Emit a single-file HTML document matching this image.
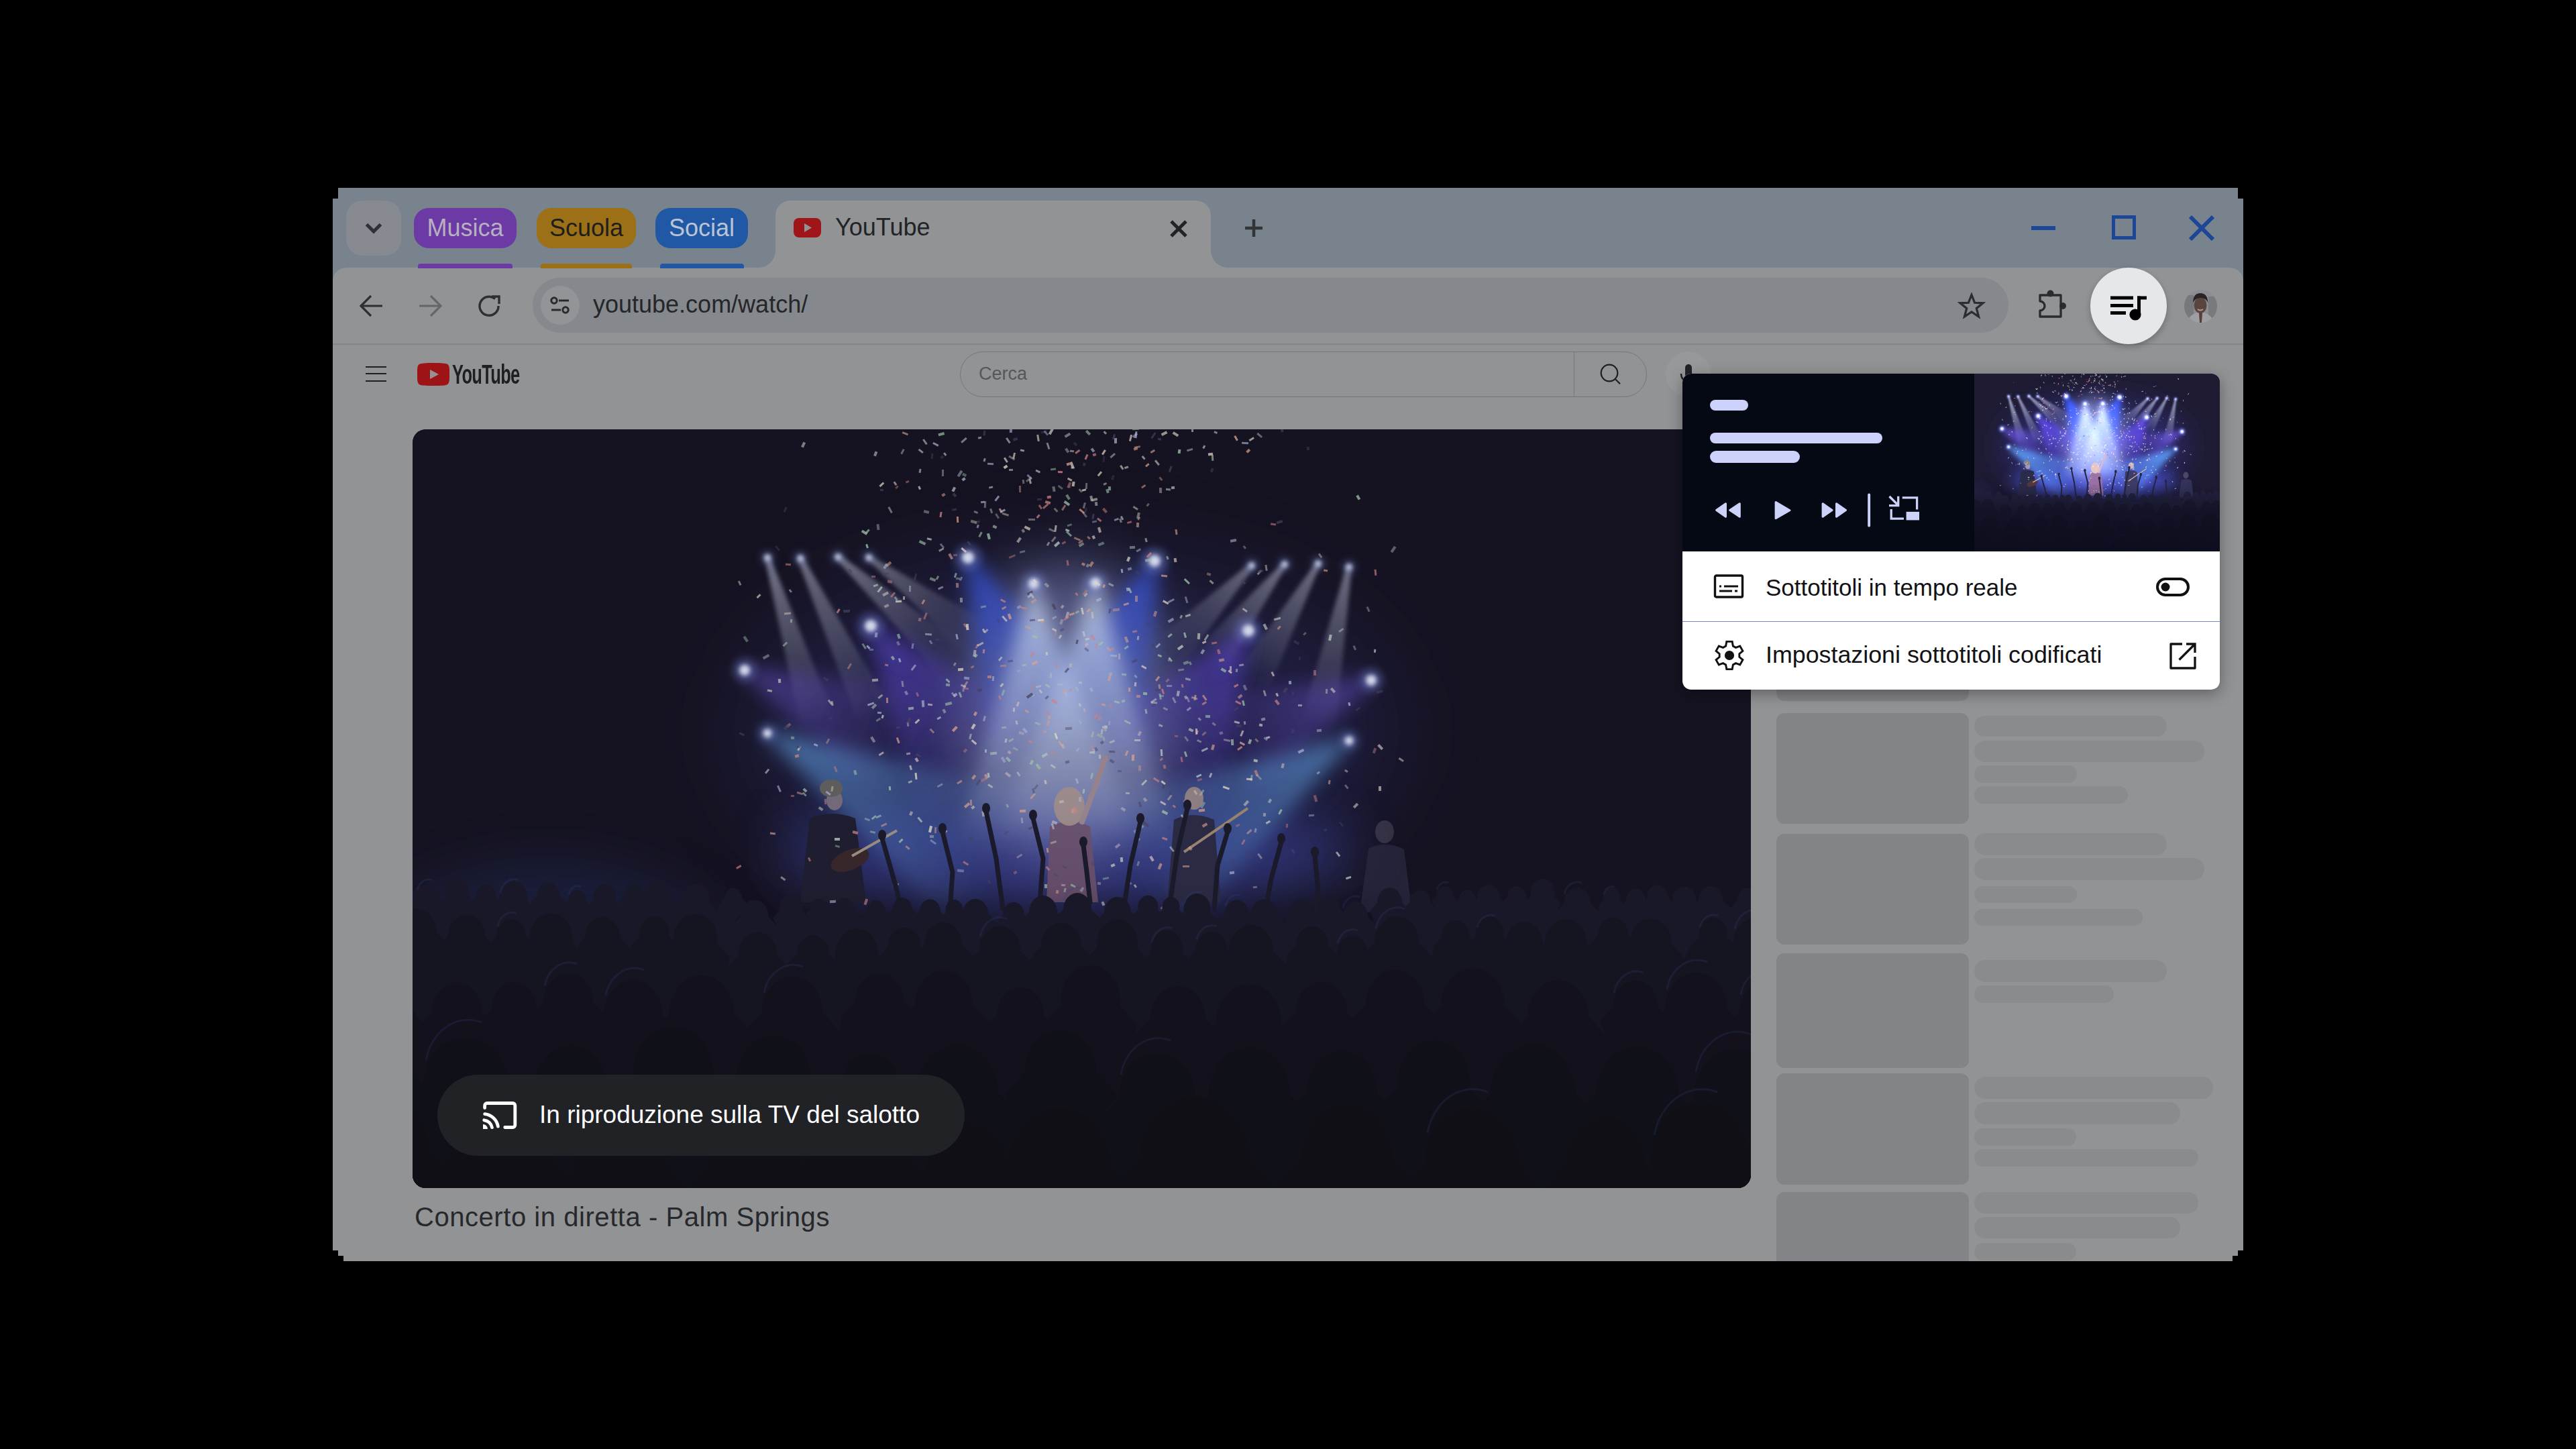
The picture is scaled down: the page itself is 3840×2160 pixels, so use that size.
<!DOCTYPE html>
<html><head><meta charset="utf-8">
<style>
html,body{margin:0;padding:0;}
body{width:3840px;height:2160px;background:#000;position:relative;overflow:hidden;font-family:"Liberation Sans",sans-serif;}
.a{position:absolute;}
.win{left:496px;top:280px;width:2848px;height:1600px;background:rgb(146,147,149);overflow:hidden;}
.strip{left:496px;top:280px;width:2848px;height:150px;background:rgb(120,131,142);}
.toolbar{left:496px;top:399px;width:2848px;height:114px;background:rgb(146,147,149);border-radius:20px 20px 0 0;}
.sep{left:496px;top:512px;width:2848px;height:2px;background:rgb(132,133,136);}
.blk{position:absolute;background:#000;}
.chev{left:516px;top:299px;width:82px;height:82px;border-radius:24px;background:rgb(135,138,145);}
.chip{top:310px;height:60px;border-radius:22px;font-size:36px;line-height:60px;text-align:center;}
.ul{top:393px;height:7px;border-radius:4px 4px 0 0;}
.tab{left:1156px;top:299px;width:649px;height:101px;background:rgb(146,147,149);border-radius:22px 22px 0 0;}
.flareL{left:1130px;top:373px;width:26px;height:26px;background:radial-gradient(circle at 0 0, rgb(120,131,142) 25.5px, rgb(146,147,149) 26.5px);}
.flareR{left:1805px;top:373px;width:26px;height:26px;background:radial-gradient(circle at 100% 0, rgb(120,131,142) 25.5px, rgb(146,147,149) 26.5px);}
.txt{white-space:nowrap;}
</style></head><body>
<div class="a win"></div>
<div class="a strip"></div>
<div class="a toolbar"></div>
<div class="a sep"></div>
<!-- window corner notches -->
<div class="blk" style="left:496px;top:280px;width:8px;height:16px"></div>
<div class="blk" style="left:3336px;top:280px;width:8px;height:16px"></div>
<div class="blk" style="left:496px;top:1864px;width:8px;height:16px"></div>
<div class="blk" style="left:504px;top:1872px;width:8px;height:8px"></div>
<div class="blk" style="left:3336px;top:1864px;width:8px;height:16px"></div>
<div class="blk" style="left:3328px;top:1872px;width:8px;height:8px"></div>

<!-- tab strip -->
<div class="a chev"></div>
<svg class="a" style="left:540px;top:323px" width="34" height="34" viewBox="0 0 34 34"><path d="M6.5 11.5 L17 22 L27.5 11.5" fill="none" stroke="rgb(45,48,55)" stroke-width="5"/></svg>
<div class="a chip txt" style="left:617px;width:153px;background:rgb(108,58,165);color:rgb(182,176,192)">Musica</div>
<div class="a ul" style="left:623px;width:141px;background:rgb(108,58,165)"></div>
<div class="a chip txt" style="left:800px;width:148px;background:rgb(155,112,22);color:rgb(32,30,28)">Scuola</div>
<div class="a ul" style="left:806px;width:136px;background:rgb(155,112,22)"></div>
<div class="a chip txt" style="left:977px;width:138px;background:rgb(32,88,165);color:rgb(186,196,212)">Social</div>
<div class="a ul" style="left:984px;width:125px;background:rgb(32,88,165)"></div>

<div class="a tab"></div>
<div class="a flareL"></div>
<div class="a flareR"></div>

<!-- active tab content -->
<svg class="a" style="left:1183px;top:325px" width="41" height="29" viewBox="0 0 41 29"><rect x="0" y="0" width="41" height="29" rx="8" fill="rgb(160,22,24)"/><path d="M16 8 L27 14.5 L16 21 Z" fill="rgb(146,147,149)"/></svg>
<div class="a txt" style="left:1245px;top:315px;font-size:36px;line-height:48px;color:rgb(34,35,38)">YouTube</div>
<svg class="a" style="left:1742px;top:326px" width="30" height="30" viewBox="0 0 30 30"><path d="M4 4 L26 26 M26 4 L4 26" stroke="rgb(34,35,38)" stroke-width="5"/></svg>
<svg class="a" style="left:1854px;top:325px" width="30" height="30" viewBox="0 0 30 30"><path d="M15 2 V28 M2 15 H28" stroke="rgb(50,52,56)" stroke-width="4.5"/></svg>

<!-- window controls -->
<div class="a" style="left:3028px;top:337px;width:36px;height:6px;background:rgb(28,70,150)"></div>
<div class="a" style="left:3148px;top:321px;width:26px;height:26px;border:5.5px solid rgb(28,70,150)"></div>
<svg class="a" style="left:3262px;top:320px" width="40" height="40" viewBox="0 0 40 40"><path d="M3 3 L37 37 M37 3 L3 37" stroke="rgb(28,70,150)" stroke-width="6"/></svg>

<!-- toolbar -->
<svg class="a" style="left:534px;top:436px" width="40" height="40" viewBox="0 0 40 40"><path d="M36 20 H5 M19 5 L4 20 L19 35" fill="none" stroke="rgb(45,47,50)" stroke-width="3.2"/></svg>
<svg class="a" style="left:621px;top:436px" width="40" height="40" viewBox="0 0 40 40"><path d="M4 20 H35 M21 5 L36 20 L21 35" fill="none" stroke="rgb(100,102,106)" stroke-width="3.2"/></svg>
<svg class="a" style="left:710px;top:436px" width="40" height="40" viewBox="0 0 40 40"><path d="M33 20 A14 14 0 1 1 28 9.5" fill="none" stroke="rgb(45,47,50)" stroke-width="3.4"/><path d="M23 6 H34 V17" fill="none" stroke="rgb(45,47,50)" stroke-width="3.4"/></svg>
<div class="a" style="left:794px;top:414px;width:2200px;height:82px;border-radius:41px;background:rgb(133,136,140)"></div>
<div class="a" style="left:806px;top:426px;width:58px;height:58px;border-radius:50%;background:rgb(147,148,151)"></div>
<svg class="a" style="left:819px;top:439px" width="32" height="32" viewBox="0 0 32 32"><circle cx="7" cy="9" r="4.2" fill="none" stroke="rgb(40,42,46)" stroke-width="3"/><path d="M14 9 H29" stroke="rgb(40,42,46)" stroke-width="3"/><circle cx="24" cy="23" r="4.2" fill="none" stroke="rgb(40,42,46)" stroke-width="3"/><path d="M3 23 H17" stroke="rgb(40,42,46)" stroke-width="3"/></svg>
<div class="a txt" style="left:884px;top:430px;font-size:36px;line-height:48px;color:rgb(36,38,42)">youtube.com/watch/</div>
<svg class="a" style="left:2918px;top:436px" width="42" height="42" viewBox="0 0 42 42"><path d="M21 3.5 L25.6 15.3 L38 15.8 L28.3 23.7 L31.6 36 L21 29 L10.4 36 L13.7 23.7 L4 15.8 L16.4 15.3 Z" fill="none" stroke="rgb(42,44,48)" stroke-width="3.2" stroke-linejoin="miter"/></svg>
<svg class="a" style="left:3036px;top:432px" width="46" height="46" viewBox="0 0 46 46"><path d="M5 8 H36 V40 H5 V31 A7 7 0 0 0 5 17 Z" fill="none" stroke="rgb(42,44,48)" stroke-width="3.3" stroke-linejoin="round"/><circle cx="20.5" cy="5.5" r="5" fill="rgb(42,44,48)"/><circle cx="39" cy="24" r="5" fill="rgb(42,44,48)"/></svg>
<div class="a" style="left:3116px;top:399px;width:114px;height:114px;border-radius:50%;background:rgb(230,231,235);box-shadow:0 4px 10px rgba(0,0,0,0.25)"></div>
<svg class="a" style="left:3140px;top:436px" width="66" height="46" viewBox="0 0 66 46"><rect x="6" y="5.5" width="34" height="5" fill="#000"/><rect x="6" y="17" width="34" height="5" fill="#000"/><rect x="6" y="28" width="23" height="5" fill="#000"/><rect x="46" y="5.5" width="14" height="5" fill="#000"/><rect x="46" y="5.5" width="5" height="30" fill="#000"/><circle cx="43" cy="33" r="8.6" fill="#000"/></svg>
<svg class="a" style="left:3256px;top:432px" width="49" height="49" viewBox="0 0 49 49"><defs><clipPath id="avc"><circle cx="24.5" cy="24.5" r="24.5"/></clipPath></defs><g clip-path="url(#avc)"><rect width="49" height="49" fill="rgb(140,141,144)"/><rect x="0" y="8" width="14" height="34" fill="rgb(118,120,124)"/><rect x="36" y="10" width="13" height="32" fill="rgb(120,122,126)"/><path d="M4 49 Q8 35 24 33 Q40 35 45 49 Z" fill="rgb(158,159,162)"/><path d="M22 34 L27 34 L26 49 L23 49 Z" fill="rgb(85,62,56)"/><ellipse cx="24" cy="23" rx="9.5" ry="12" fill="rgb(92,68,62)"/><path d="M13 20 Q13 5 24 5 Q35 5 35.5 20 Q33 12 24 12 Q16 12 13 20 Z" fill="rgb(38,36,38)"/><path d="M20 29 Q24 32 28 29" stroke="rgb(170,160,160)" stroke-width="1.8" fill="none"/></g></svg>

<!-- youtube header -->
<div class="a" style="left:545px;top:546px;width:31px;height:2px;background:rgb(30,31,34)"></div>
<div class="a" style="left:545px;top:556px;width:31px;height:2px;background:rgb(30,31,34)"></div>
<div class="a" style="left:545px;top:566.5px;width:31px;height:2px;background:rgb(30,31,34)"></div>
<svg class="a" style="left:622px;top:541px" width="48" height="34" viewBox="0 0 48 34"><path d="M24 0 C36 0 42 0.6 44.2 1.6 C46.6 2.6 47.6 5 47.9 9 C48.1 12 48.1 22 47.9 25 C47.6 29 46.6 31.4 44.2 32.4 C42 33.4 36 34 24 34 C12 34 6 33.4 3.8 32.4 C1.4 31.4 0.4 29 0.1 25 C-0.1 22 -0.1 12 0.1 9 C0.4 5 1.4 2.6 3.8 1.6 C6 0.6 12 0 24 0 Z" fill="rgb(158,20,22)"/><path d="M19 10 L32 17 L19 24 Z" fill="rgb(146,147,149)"/></svg>
<div class="a txt" style="left:674px;top:534px;font-size:41px;line-height:48px;font-weight:bold;color:rgb(30,31,34);letter-spacing:-1px;transform:scaleX(0.62);transform-origin:0 0">YouTube</div>

<!-- search -->
<div class="a" style="left:1431px;top:524px;width:1022px;height:66px;border:1px solid rgb(118,119,122);border-radius:34px;"></div>
<div class="a" style="left:2346px;top:525px;width:1px;height:66px;background:rgb(118,119,122)"></div>
<div class="a txt" style="left:1459px;top:540px;font-size:27px;line-height:34px;color:rgb(86,87,91)">Cerca</div>
<svg class="a" style="left:2380px;top:538px" width="40" height="40" viewBox="0 0 40 40"><circle cx="19" cy="18" r="12.3" fill="none" stroke="rgb(30,31,34)" stroke-width="2.2"/><path d="M27.8 27 L35 34.2" stroke="rgb(30,31,34)" stroke-width="2.2"/></svg>
<div class="a" style="left:2483px;top:524px;width:67px;height:67px;border-radius:50%;background:rgb(151,152,154)"></div>
<svg class="a" style="left:2496px;top:538px" width="40" height="40" viewBox="0 0 40 40"><rect x="16" y="5" width="10" height="20" rx="5" fill="rgb(34,35,38)"/><path d="M10 19 C10 26 14 31 21 31 C28 31 32 26 32 19" fill="none" stroke="rgb(34,35,38)" stroke-width="2.4"/></svg>

<!-- video -->
<div class="a" id="video" style="left:615px;top:640px;width:1995px;height:1131px;border-radius:20px;overflow:hidden;background:rgb(24,22,40)"><svg width="1995" height="1131" viewBox="0 0 1995 1131" style="position:absolute;left:0;top:0"><g id="vsvg"><defs><filter id="b70" x="-120%" y="-120%" width="340%" height="340%"><feGaussianBlur stdDeviation="70"/></filter><filter id="b40" x="-120%" y="-120%" width="340%" height="340%"><feGaussianBlur stdDeviation="40"/></filter><filter id="b22" x="-120%" y="-120%" width="340%" height="340%"><feGaussianBlur stdDeviation="22"/></filter><filter id="b14" x="-120%" y="-120%" width="340%" height="340%"><feGaussianBlur stdDeviation="14"/></filter><filter id="b6" x="-120%" y="-120%" width="340%" height="340%"><feGaussianBlur stdDeviation="6"/></filter><filter id="b3" x="-120%" y="-120%" width="340%" height="340%"><feGaussianBlur stdDeviation="3"/></filter><linearGradient id="crowd" x1="0" y1="0" x2="0" y2="1"><stop offset="0" stop-color="rgb(15,15,25)" stop-opacity="0"/><stop offset="0.6" stop-color="rgb(15,15,25)" stop-opacity="0"/><stop offset="0.75" stop-color="rgb(15,15,25)" stop-opacity="0.55"/><stop offset="1" stop-color="rgb(14,14,22)" stop-opacity="0.8"/></linearGradient><linearGradient id="g0" gradientUnits="userSpaceOnUse" x1="529" y1="191" x2="605" y2="440"><stop offset="0" stop-color="rgb(195, 200, 225)" stop-opacity="0.55"/><stop offset="1" stop-color="rgb(195, 200, 225)" stop-opacity="0"/></linearGradient><linearGradient id="g1" gradientUnits="userSpaceOnUse" x1="578" y1="192" x2="690" y2="430"><stop offset="0" stop-color="rgb(195, 200, 225)" stop-opacity="0.5"/><stop offset="1" stop-color="rgb(195, 200, 225)" stop-opacity="0"/></linearGradient><linearGradient id="g2" gradientUnits="userSpaceOnUse" x1="634" y1="190" x2="805" y2="345"><stop offset="0" stop-color="rgb(195, 200, 225)" stop-opacity="0.5"/><stop offset="1" stop-color="rgb(195, 200, 225)" stop-opacity="0"/></linearGradient><linearGradient id="g3" gradientUnits="userSpaceOnUse" x1="680" y1="191" x2="840" y2="310"><stop offset="0" stop-color="rgb(195, 200, 225)" stop-opacity="0.45"/><stop offset="1" stop-color="rgb(195, 200, 225)" stop-opacity="0"/></linearGradient><linearGradient id="g4" gradientUnits="userSpaceOnUse" x1="1251" y1="203" x2="1130" y2="330"><stop offset="0" stop-color="rgb(195, 200, 225)" stop-opacity="0.45"/><stop offset="1" stop-color="rgb(195, 200, 225)" stop-opacity="0"/></linearGradient><linearGradient id="g5" gradientUnits="userSpaceOnUse" x1="1300" y1="201" x2="1185" y2="350"><stop offset="0" stop-color="rgb(195, 200, 225)" stop-opacity="0.5"/><stop offset="1" stop-color="rgb(195, 200, 225)" stop-opacity="0"/></linearGradient><linearGradient id="g6" gradientUnits="userSpaceOnUse" x1="1350" y1="200" x2="1250" y2="380"><stop offset="0" stop-color="rgb(195, 200, 225)" stop-opacity="0.5"/><stop offset="1" stop-color="rgb(195, 200, 225)" stop-opacity="0"/></linearGradient><linearGradient id="g7" gradientUnits="userSpaceOnUse" x1="1396" y1="205" x2="1350" y2="440"><stop offset="0" stop-color="rgb(195, 200, 225)" stop-opacity="0.5"/><stop offset="1" stop-color="rgb(195, 200, 225)" stop-opacity="0"/></linearGradient><linearGradient id="g8" gradientUnits="userSpaceOnUse" x1="828" y1="191" x2="960" y2="480"><stop offset="0" stop-color="rgb(55, 85, 225)" stop-opacity="0.8"/><stop offset="1" stop-color="rgb(55, 85, 225)" stop-opacity="0"/></linearGradient><linearGradient id="g9" gradientUnits="userSpaceOnUse" x1="1106" y1="196" x2="990" y2="480"><stop offset="0" stop-color="rgb(55, 85, 225)" stop-opacity="0.8"/><stop offset="1" stop-color="rgb(55, 85, 225)" stop-opacity="0"/></linearGradient><linearGradient id="g10" gradientUnits="userSpaceOnUse" x1="683" y1="293" x2="860" y2="520"><stop offset="0" stop-color="rgb(90, 70, 205)" stop-opacity="0.7"/><stop offset="1" stop-color="rgb(90, 70, 205)" stop-opacity="0"/></linearGradient><linearGradient id="g11" gradientUnits="userSpaceOnUse" x1="1246" y1="300" x2="1090" y2="530"><stop offset="0" stop-color="rgb(90, 70, 205)" stop-opacity="0.7"/><stop offset="1" stop-color="rgb(90, 70, 205)" stop-opacity="0"/></linearGradient><linearGradient id="g12" gradientUnits="userSpaceOnUse" x1="495" y1="359" x2="750" y2="480"><stop offset="0" stop-color="rgb(100, 80, 195)" stop-opacity="0.6"/><stop offset="1" stop-color="rgb(100, 80, 195)" stop-opacity="0"/></linearGradient><linearGradient id="g13" gradientUnits="userSpaceOnUse" x1="1429" y1="374" x2="1180" y2="490"><stop offset="0" stop-color="rgb(100, 80, 195)" stop-opacity="0.6"/><stop offset="1" stop-color="rgb(100, 80, 195)" stop-opacity="0"/></linearGradient><linearGradient id="g14" gradientUnits="userSpaceOnUse" x1="529" y1="453" x2="880" y2="650"><stop offset="0" stop-color="rgb(95, 155, 220)" stop-opacity="0.7"/><stop offset="1" stop-color="rgb(95, 155, 220)" stop-opacity="0"/></linearGradient><linearGradient id="g15" gradientUnits="userSpaceOnUse" x1="1396" y1="464" x2="1070" y2="660"><stop offset="0" stop-color="rgb(95, 155, 220)" stop-opacity="0.7"/><stop offset="1" stop-color="rgb(95, 155, 220)" stop-opacity="0"/></linearGradient><linearGradient id="g16" gradientUnits="userSpaceOnUse" x1="926" y1="230" x2="945" y2="620"><stop offset="0" stop-color="rgb(200, 215, 240)" stop-opacity="0.78"/><stop offset="1" stop-color="rgb(200, 215, 240)" stop-opacity="0"/></linearGradient><linearGradient id="g17" gradientUnits="userSpaceOnUse" x1="1018" y1="229" x2="1005" y2="620"><stop offset="0" stop-color="rgb(200, 215, 240)" stop-opacity="0.78"/><stop offset="1" stop-color="rgb(200, 215, 240)" stop-opacity="0"/></linearGradient></defs><rect width="1995" height="1131" fill="rgb(21,19,33)"/><ellipse cx="975" cy="450" rx="480" ry="250" fill="rgb(50,50,125)" opacity="0.35" filter="url(#b70)"/><ellipse cx="975" cy="630" rx="430" ry="80" fill="rgb(60,68,160)" opacity="0.6" filter="url(#b40)"/><ellipse cx="975" cy="420" rx="170" ry="220" fill="rgb(150,160,215)" opacity="0.45" filter="url(#b40)"/><ellipse cx="200" cy="850" rx="300" ry="200" fill="rgb(35,45,95)" opacity="0.45" filter="url(#b40)"/><polygon points="525,192 580,448 630,432 533,190" fill="url(#g0)" filter="url(#b3)"/><polygon points="574,194 666,441 714,419 582,190" fill="url(#g1)" filter="url(#b3)"/><polygon points="631,193 786,366 824,324 637,187" fill="url(#g2)" filter="url(#b3)"/><polygon points="678,194 823,332 857,288 682,188" fill="url(#g3)" filter="url(#b3)"/><polygon points="1248,200 1110,311 1150,349 1254,206" fill="url(#g4)" filter="url(#b3)"/><polygon points="1297,199 1163,333 1207,367 1303,203" fill="url(#g5)" filter="url(#b3)"/><polygon points="1347,198 1226,366 1274,394 1353,202" fill="url(#g6)" filter="url(#b3)"/><polygon points="1392,204 1324,435 1376,445 1400,206" fill="url(#g7)" filter="url(#b3)"/><polygon points="824,193 864,524 1056,436 832,189" fill="url(#g8)" filter="url(#b14)"/><polygon points="1102,194 893,440 1087,520 1110,198" fill="url(#g9)" filter="url(#b14)"/><polygon points="680,295 761,597 959,443 686,291" fill="url(#g10)" filter="url(#b14)"/><polygon points="1243,298 987,460 1193,600 1249,302" fill="url(#g11)" filter="url(#b14)"/><polygon points="493,363 707,570 793,390 497,355" fill="url(#g12)" filter="url(#b14)"/><polygon points="1427,370 1138,399 1222,581 1431,378" fill="url(#g13)" filter="url(#b14)"/><polygon points="527,456 821,755 939,545 531,450" fill="url(#g14)" filter="url(#b14)"/><polygon points="1394,461 1008,557 1132,763 1398,467" fill="url(#g15)" filter="url(#b14)"/><polygon points="922,230 810,627 1080,613 930,230" fill="url(#g16)" filter="url(#b14)"/><polygon points="1014,229 870,616 1140,624 1022,229" fill="url(#g17)" filter="url(#b14)"/><circle cx="529" cy="191" r="9.9" fill="rgb(140,160,255)" opacity="0.3" filter="url(#b6)"/><circle cx="529" cy="191" r="4.5" fill="rgb(210,215,235)" filter="url(#b3)"/><circle cx="578" cy="192" r="9.9" fill="rgb(140,160,255)" opacity="0.3" filter="url(#b6)"/><circle cx="578" cy="192" r="4.5" fill="rgb(210,215,235)" filter="url(#b3)"/><circle cx="634" cy="190" r="9.9" fill="rgb(140,160,255)" opacity="0.3" filter="url(#b6)"/><circle cx="634" cy="190" r="4.5" fill="rgb(210,215,235)" filter="url(#b3)"/><circle cx="680" cy="191" r="9.9" fill="rgb(140,160,255)" opacity="0.3" filter="url(#b6)"/><circle cx="680" cy="191" r="4.5" fill="rgb(210,215,235)" filter="url(#b3)"/><circle cx="828" cy="191" r="19.8" fill="rgb(140,160,255)" opacity="0.3" filter="url(#b6)"/><circle cx="828" cy="191" r="9" fill="rgb(210,215,235)" filter="url(#b3)"/><circle cx="1106" cy="196" r="19.8" fill="rgb(140,160,255)" opacity="0.3" filter="url(#b6)"/><circle cx="1106" cy="196" r="9" fill="rgb(210,215,235)" filter="url(#b3)"/><circle cx="926" cy="230" r="17.6" fill="rgb(140,160,255)" opacity="0.3" filter="url(#b6)"/><circle cx="926" cy="230" r="8" fill="rgb(210,215,235)" filter="url(#b3)"/><circle cx="1018" cy="229" r="17.6" fill="rgb(140,160,255)" opacity="0.3" filter="url(#b6)"/><circle cx="1018" cy="229" r="8" fill="rgb(210,215,235)" filter="url(#b3)"/><circle cx="1251" cy="203" r="9.9" fill="rgb(140,160,255)" opacity="0.3" filter="url(#b6)"/><circle cx="1251" cy="203" r="4.5" fill="rgb(210,215,235)" filter="url(#b3)"/><circle cx="1300" cy="201" r="9.9" fill="rgb(140,160,255)" opacity="0.3" filter="url(#b6)"/><circle cx="1300" cy="201" r="4.5" fill="rgb(210,215,235)" filter="url(#b3)"/><circle cx="1350" cy="200" r="9.9" fill="rgb(140,160,255)" opacity="0.3" filter="url(#b6)"/><circle cx="1350" cy="200" r="4.5" fill="rgb(210,215,235)" filter="url(#b3)"/><circle cx="1396" cy="205" r="9.9" fill="rgb(140,160,255)" opacity="0.3" filter="url(#b6)"/><circle cx="1396" cy="205" r="4.5" fill="rgb(210,215,235)" filter="url(#b3)"/><circle cx="683" cy="293" r="19.8" fill="rgb(140,160,255)" opacity="0.3" filter="url(#b6)"/><circle cx="683" cy="293" r="9" fill="rgb(210,215,235)" filter="url(#b3)"/><circle cx="1246" cy="300" r="19.8" fill="rgb(140,160,255)" opacity="0.3" filter="url(#b6)"/><circle cx="1246" cy="300" r="9" fill="rgb(210,215,235)" filter="url(#b3)"/><circle cx="495" cy="359" r="17.6" fill="rgb(140,160,255)" opacity="0.3" filter="url(#b6)"/><circle cx="495" cy="359" r="8" fill="rgb(210,215,235)" filter="url(#b3)"/><circle cx="1429" cy="374" r="17.6" fill="rgb(140,160,255)" opacity="0.3" filter="url(#b6)"/><circle cx="1429" cy="374" r="8" fill="rgb(210,215,235)" filter="url(#b3)"/><circle cx="529" cy="453" r="14.3" fill="rgb(140,160,255)" opacity="0.3" filter="url(#b6)"/><circle cx="529" cy="453" r="6.5" fill="rgb(210,215,235)" filter="url(#b3)"/><circle cx="1396" cy="464" r="14.3" fill="rgb(140,160,255)" opacity="0.3" filter="url(#b6)"/><circle cx="1396" cy="464" r="6.5" fill="rgb(210,215,235)" filter="url(#b3)"/><g><path d="M592 580 Q625 566 660 580 L676 705 L578 705 Z" fill="rgb(30,30,48)"/><ellipse cx="629" cy="553" rx="12" ry="15" fill="rgb(115,105,120)"/><ellipse cx="624" cy="535" rx="17" ry="13" fill="rgb(95,93,92)"/><ellipse cx="652" cy="642" rx="30" ry="15" fill="rgb(55,38,42)" transform="rotate(-22 652 642)"/><line x1="655" y1="636" x2="722" y2="598" stroke="rgb(150,140,130)" stroke-width="4"/><path d="M950 592 Q979 578 1010 592 L1022 705 L945 705 Z" fill="rgb(105,80,105)" opacity="0.9"/><ellipse cx="979" cy="562" rx="23" ry="29" fill="rgb(160,140,135)" opacity="0.9"/><line x1="998" y1="585" x2="1033" y2="490" stroke="rgb(150,130,140)" stroke-width="8" stroke-linecap="round"/><path d="M1135 582 Q1163 568 1195 582 L1205 705 L1125 705 Z" fill="rgb(42,42,68)"/><ellipse cx="1165" cy="550" rx="14" ry="17" fill="rgb(140,125,130)"/><line x1="1150" y1="630" x2="1245" y2="565" stroke="rgb(150,130,110)" stroke-width="4"/><path d="M1425 625 Q1449 612 1478 626 L1490 720 L1412 720 Z" fill="rgb(40,40,62)" opacity="0.8"/><ellipse cx="1449" cy="600" rx="14" ry="17" fill="rgb(60,58,75)" opacity="0.8"/></g><g><rect x="787" y="63" width="10" height="3" fill="rgb(170, 180, 210)" opacity="0.47" transform="rotate(91 791 64)"/><rect x="760" y="17" width="9" height="3" fill="rgb(185, 200, 190)" opacity="0.60" transform="rotate(55 764 18)"/><rect x="1135" y="152" width="8" height="3" fill="rgb(215, 160, 140)" opacity="0.64" transform="rotate(82 1139 153)"/><rect x="999" y="52" width="5" height="4" fill="rgb(70, 65, 95)" opacity="0.52" transform="rotate(108 1002 53)"/><rect x="889" y="59" width="6" height="3" fill="rgb(185, 200, 190)" opacity="0.57" transform="rotate(1 892 61)"/><rect x="1258" y="7" width="9" height="3" fill="rgb(225, 215, 200)" opacity="0.41" transform="rotate(41 1262 9)"/><rect x="906" y="30" width="6" height="3" fill="rgb(200, 185, 185)" opacity="0.72" transform="rotate(12 909 31)"/><rect x="1073" y="-1" width="10" height="3" fill="rgb(160, 195, 170)" opacity="0.56" transform="rotate(176 1078 0)"/><rect x="880" y="44" width="8" height="3" fill="rgb(200, 185, 185)" opacity="0.77" transform="rotate(56 884 46)"/><rect x="976" y="84" width="6" height="3" fill="rgb(70, 65, 95)" opacity="0.47" transform="rotate(11 979 85)"/><rect x="820" y="66" width="6" height="4" fill="rgb(160, 195, 170)" opacity="0.44" transform="rotate(24 823 67)"/><rect x="881" y="54" width="6" height="4" fill="rgb(225, 215, 200)" opacity="0.78" transform="rotate(145 884 56)"/><rect x="1066" y="12" width="10" height="3" fill="rgb(200, 185, 185)" opacity="0.78" transform="rotate(104 1071 13)"/><rect x="997" y="126" width="9" height="3" fill="rgb(185, 200, 190)" opacity="0.43" transform="rotate(53 1002 128)"/><rect x="1027" y="232" width="5" height="3" fill="rgb(215, 160, 140)" opacity="0.76" transform="rotate(112 1030 234)"/><rect x="775" y="21" width="9" height="3" fill="rgb(170, 180, 210)" opacity="0.71" transform="rotate(28 780 23)"/><rect x="971" y="108" width="9" height="4" fill="rgb(160, 195, 170)" opacity="0.74" transform="rotate(35 975 110)"/><rect x="847" y="106" width="6" height="3" fill="rgb(170, 180, 210)" opacity="0.68" transform="rotate(173 850 108)"/><rect x="848" y="110" width="10" height="3" fill="rgb(185, 200, 190)" opacity="0.45" transform="rotate(94 853 112)"/><rect x="754" y="31" width="8" height="3" fill="rgb(170, 180, 210)" opacity="0.68" transform="rotate(38 758 32)"/><rect x="1112" y="72" width="6" height="3" fill="rgb(215, 160, 140)" opacity="0.44" transform="rotate(51 1115 74)"/><rect x="1078" y="140" width="7" height="4" fill="rgb(215, 160, 140)" opacity="0.62" transform="rotate(94 1081 142)"/><rect x="1123" y="88" width="7" height="3" fill="rgb(185, 200, 190)" opacity="0.58" transform="rotate(6 1126 89)"/><rect x="954" y="147" width="10" height="3" fill="rgb(200, 185, 185)" opacity="0.74" transform="rotate(98 959 148)"/><rect x="952" y="262" width="9" height="4" fill="rgb(70, 65, 95)" opacity="0.74" transform="rotate(63 956 264)"/><rect x="1078" y="126" width="9" height="4" fill="rgb(160, 195, 170)" opacity="0.54" transform="rotate(103 1082 128)"/><rect x="1030" y="4" width="5" height="3" fill="rgb(160, 195, 170)" opacity="0.68" transform="rotate(46 1033 5)"/><rect x="784" y="177" width="8" height="3" fill="rgb(185, 200, 190)" opacity="0.60" transform="rotate(151 788 179)"/><rect x="844" y="12" width="5" height="3" fill="rgb(185, 200, 190)" opacity="0.59" transform="rotate(172 846 13)"/><rect x="718" y="251" width="6" height="3" fill="rgb(170, 180, 210)" opacity="0.60" transform="rotate(54 721 252)"/><rect x="973" y="154" width="10" height="3" fill="rgb(160, 195, 170)" opacity="0.65" transform="rotate(43 978 156)"/><rect x="1021" y="169" width="9" height="4" fill="rgb(160, 195, 170)" opacity="0.48" transform="rotate(158 1026 171)"/><rect x="1063" y="54" width="6" height="3" fill="rgb(200, 185, 185)" opacity="0.67" transform="rotate(161 1065 56)"/><rect x="1087" y="41" width="6" height="3" fill="rgb(170, 180, 210)" opacity="0.72" transform="rotate(50 1090 42)"/><rect x="836" y="137" width="8" height="4" fill="rgb(70, 65, 95)" opacity="0.52" transform="rotate(152 841 139)"/><rect x="1028" y="119" width="8" height="4" fill="rgb(205, 130, 130)" opacity="0.52" transform="rotate(51 1032 121)"/><rect x="980" y="31" width="6" height="3" fill="rgb(225, 215, 200)" opacity="0.49" transform="rotate(4 983 32)"/><rect x="1000" y="39" width="8" height="3" fill="rgb(205, 130, 130)" opacity="0.76" transform="rotate(113 1004 41)"/><rect x="931" y="103" width="7" height="3" fill="rgb(70, 65, 95)" opacity="0.60" transform="rotate(2 935 104)"/><rect x="1075" y="26" width="9" height="3" fill="rgb(215, 160, 140)" opacity="0.55" transform="rotate(170 1080 27)"/><rect x="1268" y="204" width="9" height="3" fill="rgb(200, 185, 185)" opacity="0.54" transform="rotate(82 1272 206)"/><rect x="690" y="145" width="9" height="4" fill="rgb(170, 180, 210)" opacity="0.44" transform="rotate(83 695 146)"/><rect x="1149" y="225" width="10" height="3" fill="rgb(160, 195, 170)" opacity="0.77" transform="rotate(44 1154 227)"/><rect x="1155" y="28" width="9" height="3" fill="rgb(200, 185, 185)" opacity="0.53" transform="rotate(164 1159 30)"/><rect x="1111" y="89" width="8" height="4" fill="rgb(200, 185, 185)" opacity="0.48" transform="rotate(88 1115 91)"/><rect x="1079" y="131" width="5" height="3" fill="rgb(215, 160, 140)" opacity="0.58" transform="rotate(124 1082 133)"/><rect x="1293" y="-1" width="8" height="4" fill="rgb(70, 65, 95)" opacity="0.62" transform="rotate(79 1297 0)"/><rect x="877" y="264" width="7" height="3" fill="rgb(215, 160, 140)" opacity="0.60" transform="rotate(150 881 266)"/><rect x="1078" y="180" width="7" height="3" fill="rgb(170, 180, 210)" opacity="0.52" transform="rotate(152 1082 181)"/><rect x="1091" y="164" width="6" height="3" fill="rgb(185, 200, 190)" opacity="0.59" transform="rotate(74 1094 165)"/><rect x="942" y="23" width="10" height="3" fill="rgb(185, 200, 190)" opacity="0.59" transform="rotate(72 947 25)"/><rect x="951" y="57" width="8" height="3" fill="rgb(160, 195, 170)" opacity="0.50" transform="rotate(172 955 59)"/><rect x="894" y="13" width="7" height="4" fill="rgb(70, 65, 95)" opacity="0.60" transform="rotate(162 898 15)"/><rect x="1094" y="110" width="5" height="3" fill="rgb(200, 185, 185)" opacity="0.41" transform="rotate(126 1096 112)"/><rect x="985" y="20" width="6" height="4" fill="rgb(70, 65, 95)" opacity="0.44" transform="rotate(44 988 22)"/><rect x="962" y="85" width="8" height="3" fill="rgb(160, 195, 170)" opacity="0.41" transform="rotate(36 966 86)"/><rect x="783" y="234" width="8" height="3" fill="rgb(170, 180, 210)" opacity="0.60" transform="rotate(155 787 236)"/><rect x="1093" y="187" width="9" height="3" fill="rgb(205, 130, 130)" opacity="0.74" transform="rotate(133 1098 188)"/><rect x="918" y="134" width="10" height="3" fill="rgb(185, 200, 190)" opacity="0.45" transform="rotate(180 923 135)"/><rect x="988" y="272" width="6" height="3" fill="rgb(160, 195, 170)" opacity="0.61" transform="rotate(150 991 273)"/><rect x="943" y="107" width="8" height="4" fill="rgb(205, 130, 130)" opacity="0.75" transform="rotate(17 947 109)"/><rect x="1044" y="15" width="8" height="4" fill="rgb(170, 180, 210)" opacity="0.71" transform="rotate(91 1048 17)"/><rect x="938" y="3" width="9" height="3" fill="rgb(70, 65, 95)" opacity="0.46" transform="rotate(163 942 4)"/><rect x="1011" y="103" width="9" height="4" fill="rgb(185, 200, 190)" opacity="0.62" transform="rotate(167 1016 105)"/><rect x="1123" y="191" width="5" height="3" fill="rgb(160, 195, 170)" opacity="0.60" transform="rotate(70 1126 192)"/><rect x="788" y="96" width="5" height="4" fill="rgb(215, 160, 140)" opacity="0.56" transform="rotate(152 791 98)"/><rect x="879" y="125" width="10" height="3" fill="rgb(200, 185, 185)" opacity="0.52" transform="rotate(17 883 126)"/><rect x="1218" y="164" width="9" height="4" fill="rgb(170, 180, 210)" opacity="0.59" transform="rotate(169 1223 166)"/><rect x="1241" y="31" width="6" height="4" fill="rgb(215, 160, 140)" opacity="0.71" transform="rotate(134 1245 33)"/><rect x="705" y="201" width="9" height="4" fill="rgb(215, 160, 140)" opacity="0.55" transform="rotate(138 710 202)"/><rect x="962" y="62" width="7" height="3" fill="rgb(205, 130, 130)" opacity="0.78" transform="rotate(2 965 64)"/><rect x="1011" y="29" width="6" height="4" fill="rgb(170, 180, 210)" opacity="0.65" transform="rotate(54 1014 31)"/><rect x="804" y="87" width="7" height="4" fill="rgb(185, 200, 190)" opacity="0.69" transform="rotate(116 807 89)"/><rect x="1003" y="3" width="8" height="4" fill="rgb(160, 195, 170)" opacity="0.59" transform="rotate(46 1007 5)"/><rect x="988" y="244" width="5" height="3" fill="rgb(205, 130, 130)" opacity="0.61" transform="rotate(50 990 245)"/><rect x="580" y="20" width="8" height="4" fill="rgb(185, 200, 190)" opacity="0.61" transform="rotate(115 583 22)"/><rect x="704" y="261" width="7" height="4" fill="rgb(200, 185, 185)" opacity="0.56" transform="rotate(154 707 263)"/><rect x="849" y="3" width="7" height="3" fill="rgb(70, 65, 95)" opacity="0.65" transform="rotate(95 852 5)"/><rect x="857" y="50" width="9" height="3" fill="rgb(170, 180, 210)" opacity="0.62" transform="rotate(3 861 52)"/><rect x="868" y="128" width="8" height="3" fill="rgb(160, 195, 170)" opacity="0.42" transform="rotate(57 872 129)"/><rect x="1332" y="27" width="5" height="4" fill="rgb(70, 65, 95)" opacity="0.50" transform="rotate(77 1335 29)"/><rect x="974" y="50" width="5" height="4" fill="rgb(215, 160, 140)" opacity="0.77" transform="rotate(164 977 52)"/><rect x="1055" y="210" width="6" height="3" fill="rgb(170, 180, 210)" opacity="0.73" transform="rotate(82 1058 211)"/><rect x="918" y="76" width="7" height="3" fill="rgb(225, 215, 200)" opacity="0.64" transform="rotate(75 921 77)"/><rect x="912" y="145" width="9" height="4" fill="rgb(225, 215, 200)" opacity="0.68" transform="rotate(25 916 147)"/><rect x="976" y="82" width="9" height="4" fill="rgb(205, 130, 130)" opacity="0.50" transform="rotate(112 980 83)"/><rect x="785" y="172" width="8" height="3" fill="rgb(170, 180, 210)" opacity="0.47" transform="rotate(50 789 174)"/><rect x="1238" y="175" width="5" height="3" fill="rgb(160, 195, 170)" opacity="0.41" transform="rotate(49 1241 176)"/><rect x="1075" y="27" width="6" height="4" fill="rgb(215, 160, 140)" opacity="0.61" transform="rotate(164 1078 29)"/><rect x="873" y="119" width="7" height="3" fill="rgb(215, 160, 140)" opacity="0.72" transform="rotate(62 876 121)"/><rect x="1038" y="37" width="9" height="3" fill="rgb(170, 180, 210)" opacity="0.57" transform="rotate(138 1043 39)"/><rect x="970" y="168" width="6" height="3" fill="rgb(205, 130, 130)" opacity="0.51" transform="rotate(151 972 169)"/><rect x="988" y="316" width="6" height="3" fill="rgb(70, 65, 95)" opacity="0.73" transform="rotate(105 991 317)"/><rect x="1026" y="32" width="8" height="3" fill="rgb(225, 215, 200)" opacity="0.71" transform="rotate(123 1030 34)"/><rect x="1099" y="7" width="10" height="3" fill="rgb(70, 65, 95)" opacity="0.68" transform="rotate(125 1104 9)"/><rect x="930" y="129" width="6" height="3" fill="rgb(205, 130, 130)" opacity="0.74" transform="rotate(131 933 130)"/><rect x="900" y="163" width="8" height="4" fill="rgb(225, 215, 200)" opacity="0.57" transform="rotate(124 904 165)"/><rect x="1014" y="135" width="7" height="3" fill="rgb(170, 180, 210)" opacity="0.43" transform="rotate(168 1017 137)"/><rect x="987" y="31" width="8" height="3" fill="rgb(205, 130, 130)" opacity="0.70" transform="rotate(143 991 33)"/><rect x="695" y="80" width="8" height="3" fill="rgb(225, 215, 200)" opacity="0.71" transform="rotate(137 699 82)"/><rect x="981" y="56" width="6" height="3" fill="rgb(160, 195, 170)" opacity="0.42" transform="rotate(4 984 58)"/><rect x="719" y="86" width="5" height="3" fill="rgb(205, 130, 130)" opacity="0.43" transform="rotate(133 722 87)"/><rect x="915" y="69" width="9" height="3" fill="rgb(170, 180, 210)" opacity="0.59" transform="rotate(44 919 71)"/><rect x="1085" y="83" width="7" height="3" fill="rgb(205, 130, 130)" opacity="0.66" transform="rotate(145 1089 85)"/><rect x="785" y="7" width="9" height="4" fill="rgb(160, 195, 170)" opacity="0.69" transform="rotate(165 789 8)"/><rect x="1111" y="13" width="5" height="3" fill="rgb(70, 65, 95)" opacity="0.76" transform="rotate(16 1113 14)"/><rect x="854" y="158" width="9" height="4" fill="rgb(160, 195, 170)" opacity="0.75" transform="rotate(76 859 160)"/><rect x="973" y="99" width="8" height="4" fill="rgb(160, 195, 170)" opacity="0.56" transform="rotate(58 977 101)"/><rect x="1092" y="51" width="6" height="3" fill="rgb(215, 160, 140)" opacity="0.75" transform="rotate(140 1095 53)"/><rect x="972" y="30" width="7" height="4" fill="rgb(170, 180, 210)" opacity="0.47" transform="rotate(56 976 32)"/><rect x="993" y="120" width="9" height="3" fill="rgb(215, 160, 140)" opacity="0.74" transform="rotate(40 997 122)"/><rect x="700" y="213" width="10" height="3" fill="rgb(70, 65, 95)" opacity="0.72" transform="rotate(170 705 215)"/><rect x="819" y="15" width="10" height="3" fill="rgb(185, 200, 190)" opacity="0.58" transform="rotate(139 823 16)"/><rect x="979" y="52" width="10" height="4" fill="rgb(225, 215, 200)" opacity="0.70" transform="rotate(69 984 53)"/><rect x="1289" y="136" width="9" height="4" fill="rgb(70, 65, 95)" opacity="0.70" transform="rotate(163 1293 138)"/><rect x="925" y="225" width="6" height="3" fill="rgb(225, 215, 200)" opacity="0.75" transform="rotate(58 928 226)"/><rect x="1000" y="82" width="9" height="3" fill="rgb(200, 185, 185)" opacity="0.46" transform="rotate(93 1004 84)"/><rect x="971" y="7" width="9" height="4" fill="rgb(185, 200, 190)" opacity="0.53" transform="rotate(148 976 9)"/><rect x="832" y="136" width="9" height="4" fill="rgb(225, 215, 200)" opacity="0.41" transform="rotate(15 837 138)"/><rect x="1008" y="101" width="8" height="4" fill="rgb(200, 185, 185)" opacity="0.61" transform="rotate(79 1012 103)"/><rect x="884" y="15" width="9" height="3" fill="rgb(185, 200, 190)" opacity="0.61" transform="rotate(56 888 16)"/><rect x="1195" y="3" width="5" height="3" fill="rgb(160, 195, 170)" opacity="0.66" transform="rotate(25 1197 4)"/><rect x="967" y="296" width="6" height="3" fill="rgb(70, 65, 95)" opacity="0.49" transform="rotate(155 969 298)"/><rect x="820" y="72" width="5" height="4" fill="rgb(170, 180, 210)" opacity="0.74" transform="rotate(144 822 74)"/><rect x="1092" y="193" width="10" height="4" fill="rgb(160, 195, 170)" opacity="0.61" transform="rotate(172 1097 195)"/><rect x="1054" y="56" width="7" height="3" fill="rgb(225, 215, 200)" opacity="0.61" transform="rotate(56 1058 57)"/><rect x="948" y="149" width="9" height="3" fill="rgb(185, 200, 190)" opacity="0.45" transform="rotate(25 953 151)"/><rect x="908" y="77" width="6" height="3" fill="rgb(185, 200, 190)" opacity="0.44" transform="rotate(83 911 78)"/><rect x="1406" y="100" width="7" height="4" fill="rgb(160, 195, 170)" opacity="0.75" transform="rotate(61 1410 102)"/><rect x="1037" y="87" width="6" height="4" fill="rgb(160, 195, 170)" opacity="0.64" transform="rotate(87 1040 88)"/><rect x="942" y="230" width="7" height="4" fill="rgb(200, 185, 185)" opacity="0.50" transform="rotate(44 945 232)"/><rect x="1020" y="133" width="7" height="3" fill="rgb(205, 130, 130)" opacity="0.70" transform="rotate(37 1023 135)"/><rect x="1066" y="206" width="6" height="4" fill="rgb(170, 180, 210)" opacity="0.53" transform="rotate(163 1069 208)"/><rect x="888" y="-2" width="9" height="4" fill="rgb(170, 180, 210)" opacity="0.62" transform="rotate(93 892 0)"/><rect x="1188" y="40" width="9" height="3" fill="rgb(160, 195, 170)" opacity="0.66" transform="rotate(86 1192 42)"/><rect x="865" y="143" width="6" height="4" fill="rgb(185, 200, 190)" opacity="0.61" transform="rotate(24 867 145)"/><rect x="1247" y="14" width="8" height="3" fill="rgb(225, 215, 200)" opacity="0.66" transform="rotate(148 1251 15)"/><rect x="806" y="215" width="7" height="3" fill="rgb(185, 200, 190)" opacity="0.57" transform="rotate(108 809 217)"/><rect x="755" y="167" width="10" height="4" fill="rgb(160, 195, 170)" opacity="0.63" transform="rotate(25 760 169)"/><rect x="810" y="221" width="6" height="3" fill="rgb(160, 195, 170)" opacity="0.44" transform="rotate(6 813 223)"/><rect x="859" y="84" width="6" height="3" fill="rgb(200, 185, 185)" opacity="0.64" transform="rotate(168 862 86)"/><rect x="1190" y="58" width="6" height="4" fill="rgb(70, 65, 95)" opacity="0.53" transform="rotate(108 1192 60)"/><rect x="1235" y="226" width="8" height="3" fill="rgb(70, 65, 95)" opacity="0.72" transform="rotate(51 1239 227)"/><rect x="1066" y="136" width="7" height="3" fill="rgb(205, 130, 130)" opacity="0.60" transform="rotate(163 1069 138)"/><rect x="676" y="151" width="7" height="3" fill="rgb(160, 195, 170)" opacity="0.68" transform="rotate(131 679 152)"/><rect x="767" y="162" width="7" height="3" fill="rgb(185, 200, 190)" opacity="0.72" transform="rotate(13 770 163)"/><rect x="1140" y="31" width="6" height="4" fill="rgb(160, 195, 170)" opacity="0.76" transform="rotate(98 1143 33)"/><rect x="843" y="156" width="8" height="3" fill="rgb(160, 195, 170)" opacity="0.62" transform="rotate(117 847 157)"/><rect x="1027" y="43" width="9" height="3" fill="rgb(70, 65, 95)" opacity="0.40" transform="rotate(97 1031 44)"/><rect x="977" y="142" width="7" height="3" fill="rgb(160, 195, 170)" opacity="0.45" transform="rotate(161 980 143)"/><rect x="933" y="114" width="7" height="3" fill="rgb(205, 130, 130)" opacity="0.59" transform="rotate(56 936 115)"/><rect x="1349" y="187" width="7" height="3" fill="rgb(200, 185, 185)" opacity="0.47" transform="rotate(53 1353 189)"/><rect x="1045" y="134" width="7" height="3" fill="rgb(170, 180, 210)" opacity="0.60" transform="rotate(158 1049 135)"/><rect x="1187" y="35" width="7" height="4" fill="rgb(225, 215, 200)" opacity="0.73" transform="rotate(173 1190 37)"/><rect x="952" y="87" width="8" height="4" fill="rgb(185, 200, 190)" opacity="0.46" transform="rotate(80 956 89)"/><rect x="1020" y="64" width="8" height="3" fill="rgb(225, 215, 200)" opacity="0.70" transform="rotate(130 1024 66)"/><rect x="817" y="178" width="9" height="3" fill="rgb(225, 215, 200)" opacity="0.74" transform="rotate(41 821 180)"/><rect x="1018" y="109" width="6" height="4" fill="rgb(185, 200, 190)" opacity="0.57" transform="rotate(83 1020 110)"/><rect x="791" y="35" width="5" height="3" fill="rgb(225, 215, 200)" opacity="0.56" transform="rotate(51 793 37)"/><rect x="888" y="41" width="10" height="3" fill="rgb(200, 185, 185)" opacity="0.47" transform="rotate(32 893 43)"/><rect x="1328" y="302" width="5" height="3" fill="rgb(160, 195, 170)" opacity="0.40" transform="rotate(135 1330 304)"/><rect x="1013" y="36" width="5" height="4" fill="rgb(205, 130, 130)" opacity="0.65" transform="rotate(164 1016 38)"/><rect x="1008" y="199" width="8" height="4" fill="rgb(215, 160, 140)" opacity="0.63" transform="rotate(123 1012 201)"/><rect x="981" y="80" width="7" height="4" fill="rgb(225, 215, 200)" opacity="0.70" transform="rotate(99 985 82)"/><rect x="999" y="119" width="7" height="3" fill="rgb(70, 65, 95)" opacity="0.50" transform="rotate(104 1003 121)"/><rect x="1125" y="59" width="9" height="3" fill="rgb(70, 65, 95)" opacity="0.71" transform="rotate(109 1130 60)"/><rect x="730" y="5" width="9" height="3" fill="rgb(215, 160, 140)" opacity="0.62" transform="rotate(21 735 6)"/><rect x="716" y="79" width="6" height="3" fill="rgb(200, 185, 185)" opacity="0.66" transform="rotate(56 719 81)"/><rect x="1075" y="250" width="9" height="4" fill="rgb(215, 160, 140)" opacity="0.54" transform="rotate(90 1079 252)"/><rect x="973" y="198" width="8" height="3" fill="rgb(205, 130, 130)" opacity="0.56" transform="rotate(82 977 199)"/><rect x="901" y="88" width="10" height="3" fill="rgb(215, 160, 140)" opacity="0.45" transform="rotate(88 906 89)"/><rect x="734" y="76" width="5" height="3" fill="rgb(215, 160, 140)" opacity="0.43" transform="rotate(160 737 78)"/><rect x="811" y="64" width="10" height="4" fill="rgb(170, 180, 210)" opacity="0.51" transform="rotate(122 816 66)"/><rect x="1188" y="226" width="7" height="3" fill="rgb(225, 215, 200)" opacity="0.53" transform="rotate(41 1191 227)"/><rect x="1177" y="26" width="5" height="3" fill="rgb(200, 185, 185)" opacity="0.68" transform="rotate(117 1180 27)"/><rect x="669" y="152" width="9" height="4" fill="rgb(160, 195, 170)" opacity="0.76" transform="rotate(32 674 154)"/><rect x="1006" y="160" width="5" height="3" fill="rgb(215, 160, 140)" opacity="0.58" transform="rotate(44 1008 161)"/><rect x="808" y="132" width="9" height="3" fill="rgb(215, 160, 140)" opacity="0.73" transform="rotate(88 812 134)"/><rect x="1014" y="159" width="5" height="4" fill="rgb(225, 215, 200)" opacity="0.64" transform="rotate(65 1016 160)"/><rect x="726" y="31" width="8" height="3" fill="rgb(170, 180, 210)" opacity="0.50" transform="rotate(117 730 33)"/><rect x="914" y="74" width="10" height="3" fill="rgb(185, 200, 190)" opacity="0.41" transform="rotate(138 919 75)"/><rect x="908" y="149" width="5" height="4" fill="rgb(200, 185, 185)" opacity="0.51" transform="rotate(59 910 151)"/><rect x="837" y="122" width="6" height="3" fill="rgb(170, 180, 210)" opacity="0.52" transform="rotate(23 840 123)"/><rect x="805" y="96" width="6" height="4" fill="rgb(70, 65, 95)" opacity="0.65" transform="rotate(47 808 98)"/><rect x="1033" y="90" width="6" height="4" fill="rgb(160, 195, 170)" opacity="0.60" transform="rotate(73 1036 92)"/><rect x="929" y="61" width="7" height="3" fill="rgb(200, 185, 185)" opacity="0.68" transform="rotate(25 932 62)"/><rect x="948" y="1" width="9" height="4" fill="rgb(185, 200, 190)" opacity="0.75" transform="rotate(119 952 3)"/><rect x="1019" y="252" width="8" height="4" fill="rgb(170, 180, 210)" opacity="0.70" transform="rotate(156 1023 254)"/><rect x="956" y="303" width="6" height="3" fill="rgb(205, 130, 130)" opacity="0.51" transform="rotate(88 959 304)"/><rect x="939" y="114" width="10" height="3" fill="rgb(205, 130, 130)" opacity="0.65" transform="rotate(138 944 115)"/><rect x="976" y="73" width="7" height="3" fill="rgb(225, 215, 200)" opacity="0.67" transform="rotate(27 979 75)"/><rect x="753" y="85" width="5" height="3" fill="rgb(185, 200, 190)" opacity="0.75" transform="rotate(66 755 87)"/><rect x="950" y="162" width="9" height="3" fill="rgb(225, 215, 200)" opacity="0.43" transform="rotate(129 955 164)"/><rect x="1101" y="32" width="7" height="3" fill="rgb(215, 160, 140)" opacity="0.64" transform="rotate(147 1104 33)"/><rect x="868" y="102" width="9" height="3" fill="rgb(170, 180, 210)" opacity="0.69" transform="rotate(127 872 103)"/><rect x="826" y="168" width="7" height="3" fill="rgb(70, 65, 95)" opacity="0.73" transform="rotate(50 829 170)"/><rect x="730" y="251" width="5" height="3" fill="rgb(225, 215, 200)" opacity="0.59" transform="rotate(91 733 252)"/><rect x="940" y="4" width="8" height="3" fill="rgb(170, 180, 210)" opacity="0.49" transform="rotate(46 944 6)"/><rect x="1159" y="-0" width="7" height="3" fill="rgb(185, 200, 190)" opacity="0.64" transform="rotate(89 1163 1)"/><rect x="708" y="118" width="10" height="3" fill="rgb(200, 185, 185)" opacity="0.52" transform="rotate(62 712 119)"/><rect x="922" y="254" width="8" height="4" fill="rgb(215, 160, 140)" opacity="0.53" transform="rotate(148 926 256)"/><rect x="871" y="284" width="6" height="3" fill="rgb(70, 65, 95)" opacity="0.49" transform="rotate(66 874 285)"/><rect x="973" y="149" width="6" height="3" fill="rgb(185, 200, 190)" opacity="0.78" transform="rotate(23 976 151)"/><rect x="1101" y="320" width="7" height="4" fill="rgb(70, 65, 95)" opacity="0.42" transform="rotate(92 1104 322)"/><rect x="860" y="120" width="7" height="3" fill="rgb(160, 195, 170)" opacity="0.50" transform="rotate(72 863 121)"/><rect x="876" y="121" width="8" height="3" fill="rgb(170, 180, 210)" opacity="0.72" transform="rotate(154 880 122)"/><rect x="1063" y="192" width="7" height="4" fill="rgb(225, 215, 200)" opacity="0.70" transform="rotate(112 1067 194)"/><rect x="1074" y="116" width="8" height="3" fill="rgb(200, 185, 185)" opacity="0.58" transform="rotate(33 1078 117)"/><rect x="878" y="281" width="10" height="3" fill="rgb(225, 215, 200)" opacity="0.64" transform="rotate(49 883 282)"/><rect x="692" y="238" width="10" height="3" fill="rgb(185, 200, 190)" opacity="0.73" transform="rotate(128 697 239)"/><rect x="1020" y="148" width="8" height="4" fill="rgb(200, 185, 185)" opacity="0.72" transform="rotate(73 1024 150)"/><rect x="1029" y="81" width="5" height="3" fill="rgb(225, 215, 200)" opacity="0.48" transform="rotate(157 1032 82)"/><rect x="945" y="170" width="6" height="3" fill="rgb(170, 180, 210)" opacity="0.61" transform="rotate(121 948 171)"/><rect x="998" y="90" width="6" height="3" fill="rgb(225, 215, 200)" opacity="0.73" transform="rotate(168 1001 91)"/><rect x="892" y="39" width="9" height="3" fill="rgb(225, 215, 200)" opacity="0.64" transform="rotate(102 897 40)"/><rect x="955" y="119" width="7" height="3" fill="rgb(200, 185, 185)" opacity="0.46" transform="rotate(47 959 121)"/><rect x="1224" y="12" width="8" height="3" fill="rgb(215, 160, 140)" opacity="0.78" transform="rotate(61 1228 13)"/><rect x="1060" y="325" width="7" height="3" fill="rgb(160, 195, 170)" opacity="0.61" transform="rotate(145 1064 326)"/><rect x="1016" y="228" width="9" height="3" fill="rgb(225, 215, 200)" opacity="0.73" transform="rotate(34 1020 230)"/><rect x="1133" y="5" width="9" height="4" fill="rgb(200, 185, 185)" opacity="0.76" transform="rotate(32 1137 7)"/><rect x="754" y="61" width="6" height="3" fill="rgb(185, 200, 190)" opacity="0.60" transform="rotate(100 757 62)"/><rect x="1073" y="6" width="10" height="3" fill="rgb(170, 180, 210)" opacity="0.70" transform="rotate(95 1078 8)"/><rect x="957" y="169" width="9" height="4" fill="rgb(185, 200, 190)" opacity="0.76" transform="rotate(138 961 171)"/><rect x="686" y="35" width="7" height="4" fill="rgb(200, 185, 185)" opacity="0.62" transform="rotate(112 690 37)"/><rect x="993" y="165" width="7" height="3" fill="rgb(205, 130, 130)" opacity="0.64" transform="rotate(146 996 167)"/><rect x="849" y="44" width="5" height="3" fill="rgb(225, 215, 200)" opacity="0.53" transform="rotate(107 852 46)"/><rect x="965" y="115" width="9" height="3" fill="rgb(215, 160, 140)" opacity="0.53" transform="rotate(122 970 117)"/><rect x="1053" y="135" width="6" height="3" fill="rgb(200, 185, 185)" opacity="0.55" transform="rotate(72 1056 136)"/><rect x="889" y="189" width="10" height="3" fill="rgb(205, 130, 130)" opacity="0.43" transform="rotate(158 894 190)"/><rect x="805" y="117" width="7" height="3" fill="rgb(70, 65, 95)" opacity="0.56" transform="rotate(169 808 119)"/><rect x="946" y="101" width="6" height="4" fill="rgb(205, 130, 130)" opacity="0.73" transform="rotate(171 949 102)"/><rect x="1004" y="203" width="5" height="4" fill="rgb(200, 185, 185)" opacity="0.48" transform="rotate(119 1007 204)"/><rect x="737" y="235" width="9" height="3" fill="rgb(185, 200, 190)" opacity="0.45" transform="rotate(91 741 237)"/><rect x="954" y="278" width="7" height="3" fill="rgb(170, 180, 210)" opacity="0.54" transform="rotate(151 957 280)"/><rect x="927" y="11" width="10" height="3" fill="rgb(225, 215, 200)" opacity="0.63" transform="rotate(81 932 13)"/><rect x="684" y="219" width="6" height="3" fill="rgb(205, 130, 130)" opacity="0.47" transform="rotate(179 687 220)"/><rect x="786" y="40" width="5" height="4" fill="rgb(70, 65, 95)" opacity="0.44" transform="rotate(136 789 42)"/><rect x="993" y="90" width="6" height="3" fill="rgb(225, 215, 200)" opacity="0.42" transform="rotate(45 996 91)"/><rect x="1134" y="193" width="6" height="4" fill="rgb(200, 185, 185)" opacity="0.73" transform="rotate(82 1137 195)"/><rect x="1011" y="129" width="8" height="3" fill="rgb(70, 65, 95)" opacity="0.73" transform="rotate(100 1015 130)"/><rect x="1130" y="85" width="5" height="4" fill="rgb(185, 200, 190)" opacity="0.70" transform="rotate(175 1133 87)"/><rect x="1055" y="131" width="6" height="3" fill="rgb(170, 180, 210)" opacity="0.72" transform="rotate(62 1058 132)"/><rect x="1042" y="71" width="7" height="4" fill="rgb(70, 65, 95)" opacity="0.43" transform="rotate(111 1045 72)"/><rect x="1073" y="7" width="8" height="4" fill="rgb(170, 180, 210)" opacity="0.61" transform="rotate(131 1077 9)"/><rect x="1117" y="4" width="9" height="4" fill="rgb(225, 215, 200)" opacity="0.65" transform="rotate(152 1121 6)"/><rect x="997" y="111" width="9" height="3" fill="rgb(200, 185, 185)" opacity="0.45" transform="rotate(104 1001 113)"/><rect x="1237" y="268" width="8" height="3" fill="rgb(185, 200, 190)" opacity="0.66" transform="rotate(35 1241 269)"/><rect x="953" y="297" width="7" height="3" fill="rgb(225, 215, 200)" opacity="0.56" transform="rotate(26 956 299)"/><rect x="1072" y="299" width="7" height="3" fill="rgb(205, 130, 130)" opacity="0.60" transform="rotate(169 1076 301)"/><rect x="739" y="525" width="6" height="3" fill="rgb(185, 200, 190)" opacity="0.66" transform="rotate(158 742 526)"/><rect x="682" y="599" width="8" height="3" fill="rgb(160, 195, 170)" opacity="0.53" transform="rotate(12 686 600)"/><rect x="681" y="327" width="6" height="3" fill="rgb(170, 180, 210)" opacity="0.41" transform="rotate(2 684 329)"/><rect x="752" y="581" width="9" height="3" fill="rgb(185, 200, 190)" opacity="0.71" transform="rotate(50 757 582)"/><rect x="1152" y="277" width="8" height="3" fill="rgb(185, 200, 190)" opacity="0.70" transform="rotate(161 1156 278)"/><rect x="1028" y="442" width="8" height="4" fill="rgb(200, 185, 185)" opacity="0.65" transform="rotate(178 1032 444)"/><rect x="1022" y="487" width="6" height="3" fill="rgb(200, 185, 185)" opacity="0.77" transform="rotate(86 1025 488)"/><rect x="629" y="611" width="8" height="4" fill="rgb(185, 200, 190)" opacity="0.78" transform="rotate(180 633 612)"/><rect x="744" y="218" width="10" height="3" fill="rgb(70, 65, 95)" opacity="0.54" transform="rotate(105 749 220)"/><rect x="1114" y="556" width="9" height="3" fill="rgb(225, 215, 200)" opacity="0.65" transform="rotate(30 1119 558)"/><rect x="1226" y="406" width="9" height="3" fill="rgb(205, 130, 130)" opacity="0.73" transform="rotate(28 1231 408)"/><rect x="1432" y="330" width="5" height="3" fill="rgb(185, 200, 190)" opacity="0.69" transform="rotate(96 1435 331)"/><rect x="893" y="416" width="6" height="3" fill="rgb(225, 215, 200)" opacity="0.51" transform="rotate(92 896 418)"/><rect x="1001" y="327" width="7" height="3" fill="rgb(70, 65, 95)" opacity="0.46" transform="rotate(39 1005 329)"/><rect x="1069" y="488" width="9" height="4" fill="rgb(215, 160, 140)" opacity="0.77" transform="rotate(91 1074 490)"/><rect x="739" y="414" width="8" height="4" fill="rgb(160, 195, 170)" opacity="0.71" transform="rotate(173 743 416)"/><rect x="1027" y="704" width="6" height="4" fill="rgb(225, 215, 200)" opacity="0.60" transform="rotate(68 1029 706)"/><rect x="1081" y="451" width="7" height="4" fill="rgb(200, 185, 185)" opacity="0.55" transform="rotate(116 1084 453)"/><rect x="922" y="538" width="8" height="3" fill="rgb(70, 65, 95)" opacity="0.48" transform="rotate(75 926 539)"/><rect x="1267" y="430" width="6" height="4" fill="rgb(185, 200, 190)" opacity="0.55" transform="rotate(167 1269 432)"/><rect x="857" y="673" width="6" height="3" fill="rgb(70, 65, 95)" opacity="0.55" transform="rotate(77 860 674)"/><rect x="849" y="330" width="6" height="3" fill="rgb(215, 160, 140)" opacity="0.60" transform="rotate(96 852 331)"/><rect x="750" y="394" width="6" height="3" fill="rgb(205, 130, 130)" opacity="0.54" transform="rotate(67 753 395)"/><rect x="1237" y="383" width="8" height="4" fill="rgb(185, 200, 190)" opacity="0.40" transform="rotate(67 1241 385)"/><rect x="484" y="227" width="7" height="3" fill="rgb(225, 215, 200)" opacity="0.48" transform="rotate(66 487 229)"/><rect x="978" y="388" width="6" height="3" fill="rgb(205, 130, 130)" opacity="0.42" transform="rotate(137 981 389)"/><rect x="1118" y="501" width="6" height="4" fill="rgb(205, 130, 130)" opacity="0.55" transform="rotate(77 1121 503)"/><rect x="895" y="659" width="5" height="4" fill="rgb(205, 130, 130)" opacity="0.41" transform="rotate(150 898 661)"/><rect x="1051" y="509" width="6" height="3" fill="rgb(70, 65, 95)" opacity="0.42" transform="rotate(180 1054 510)"/><rect x="764" y="304" width="10" height="3" fill="rgb(170, 180, 210)" opacity="0.62" transform="rotate(4 768 306)"/><rect x="1347" y="447" width="7" height="4" fill="rgb(185, 200, 190)" opacity="0.47" transform="rotate(177 1351 449)"/><rect x="1275" y="552" width="6" height="4" fill="rgb(185, 200, 190)" opacity="0.57" transform="rotate(122 1278 554)"/><rect x="1267" y="292" width="9" height="4" fill="rgb(185, 200, 190)" opacity="0.67" transform="rotate(64 1271 294)"/><rect x="689" y="577" width="8" height="3" fill="rgb(185, 200, 190)" opacity="0.56" transform="rotate(156 694 578)"/><rect x="544" y="373" width="6" height="4" fill="rgb(200, 185, 185)" opacity="0.74" transform="rotate(85 547 375)"/><rect x="1110" y="396" width="9" height="3" fill="rgb(160, 195, 170)" opacity="0.59" transform="rotate(79 1114 398)"/><rect x="682" y="460" width="9" height="4" fill="rgb(200, 185, 185)" opacity="0.53" transform="rotate(58 686 462)"/><rect x="1081" y="558" width="8" height="3" fill="rgb(70, 65, 95)" opacity="0.54" transform="rotate(70 1085 559)"/><rect x="743" y="352" width="10" height="3" fill="rgb(170, 180, 210)" opacity="0.64" transform="rotate(126 747 354)"/><rect x="832" y="562" width="5" height="4" fill="rgb(225, 215, 200)" opacity="0.54" transform="rotate(144 835 564)"/><rect x="920" y="282" width="8" height="3" fill="rgb(70, 65, 95)" opacity="0.55" transform="rotate(176 924 284)"/><rect x="1080" y="503" width="8" height="4" fill="rgb(215, 160, 140)" opacity="0.41" transform="rotate(90 1084 505)"/><rect x="876" y="254" width="8" height="3" fill="rgb(205, 130, 130)" opacity="0.71" transform="rotate(27 880 256)"/><rect x="1301" y="590" width="6" height="3" fill="rgb(205, 130, 130)" opacity="0.45" transform="rotate(96 1304 591)"/><rect x="999" y="241" width="9" height="4" fill="rgb(205, 130, 130)" opacity="0.44" transform="rotate(124 1003 243)"/><rect x="1069" y="174" width="8" height="4" fill="rgb(185, 200, 190)" opacity="0.49" transform="rotate(177 1073 176)"/><rect x="1255" y="462" width="6" height="3" fill="rgb(215, 160, 140)" opacity="0.50" transform="rotate(46 1258 464)"/><rect x="1020" y="455" width="9" height="4" fill="rgb(160, 195, 170)" opacity="0.46" transform="rotate(27 1025 457)"/><rect x="1258" y="211" width="8" height="3" fill="rgb(225, 215, 200)" opacity="0.52" transform="rotate(132 1262 213)"/><rect x="612" y="554" width="8" height="3" fill="rgb(205, 130, 130)" opacity="0.53" transform="rotate(87 616 555)"/><rect x="1041" y="648" width="6" height="4" fill="rgb(185, 200, 190)" opacity="0.76" transform="rotate(159 1044 650)"/><rect x="1391" y="666" width="8" height="3" fill="rgb(185, 200, 190)" opacity="0.75" transform="rotate(162 1395 668)"/><rect x="1119" y="415" width="7" height="3" fill="rgb(185, 200, 190)" opacity="0.45" transform="rotate(25 1122 416)"/><rect x="861" y="481" width="10" height="4" fill="rgb(185, 200, 190)" opacity="0.57" transform="rotate(175 866 483)"/><rect x="929" y="381" width="8" height="3" fill="rgb(185, 200, 190)" opacity="0.56" transform="rotate(167 933 383)"/><rect x="879" y="444" width="7" height="3" fill="rgb(185, 200, 190)" opacity="0.45" transform="rotate(175 882 445)"/><rect x="906" y="567" width="9" height="4" fill="rgb(215, 160, 140)" opacity="0.73" transform="rotate(176 910 569)"/><rect x="1014" y="426" width="7" height="3" fill="rgb(205, 130, 130)" opacity="0.75" transform="rotate(123 1018 428)"/><rect x="1208" y="533" width="10" height="3" fill="rgb(225, 215, 200)" opacity="0.76" transform="rotate(20 1213 534)"/><rect x="1028" y="444" width="9" height="4" fill="rgb(185, 200, 190)" opacity="0.40" transform="rotate(94 1033 446)"/><rect x="1342" y="549" width="10" height="4" fill="rgb(205, 130, 130)" opacity="0.48" transform="rotate(73 1347 550)"/><rect x="589" y="640" width="6" height="3" fill="rgb(205, 130, 130)" opacity="0.60" transform="rotate(67 592 641)"/><rect x="771" y="613" width="10" height="3" fill="rgb(170, 180, 210)" opacity="0.50" transform="rotate(36 775 615)"/><rect x="573" y="473" width="7" height="3" fill="rgb(225, 215, 200)" opacity="0.63" transform="rotate(118 576 475)"/><rect x="704" y="350" width="5" height="3" fill="rgb(205, 130, 130)" opacity="0.68" transform="rotate(12 707 352)"/><rect x="989" y="477" width="6" height="3" fill="rgb(170, 180, 210)" opacity="0.57" transform="rotate(123 992 478)"/><rect x="1254" y="492" width="6" height="4" fill="rgb(185, 200, 190)" opacity="0.78" transform="rotate(13 1257 493)"/><rect x="876" y="491" width="9" height="4" fill="rgb(170, 180, 210)" opacity="0.54" transform="rotate(61 881 493)"/><rect x="899" y="634" width="9" height="3" fill="rgb(200, 185, 185)" opacity="0.42" transform="rotate(147 904 636)"/><rect x="852" y="479" width="5" height="3" fill="rgb(170, 180, 210)" opacity="0.75" transform="rotate(89 855 480)"/><rect x="682" y="729" width="6" height="4" fill="rgb(170, 180, 210)" opacity="0.49" transform="rotate(170 685 730)"/><rect x="920" y="333" width="9" height="4" fill="rgb(205, 130, 130)" opacity="0.54" transform="rotate(120 924 335)"/><rect x="1104" y="521" width="10" height="3" fill="rgb(205, 130, 130)" opacity="0.66" transform="rotate(33 1109 522)"/><rect x="1116" y="531" width="8" height="3" fill="rgb(70, 65, 95)" opacity="0.69" transform="rotate(94 1120 532)"/><rect x="1115" y="491" width="5" height="3" fill="rgb(215, 160, 140)" opacity="0.46" transform="rotate(137 1117 492)"/><rect x="827" y="608" width="6" height="4" fill="rgb(70, 65, 95)" opacity="0.53" transform="rotate(175 831 610)"/><rect x="1239" y="436" width="5" height="3" fill="rgb(200, 185, 185)" opacity="0.57" transform="rotate(84 1241 437)"/><rect x="723" y="344" width="6" height="3" fill="rgb(170, 180, 210)" opacity="0.77" transform="rotate(72 727 345)"/><rect x="1209" y="462" width="10" height="3" fill="rgb(200, 185, 185)" opacity="0.47" transform="rotate(11 1214 464)"/><rect x="1167" y="451" width="5" height="3" fill="rgb(205, 130, 130)" opacity="0.66" transform="rotate(111 1170 452)"/><rect x="970" y="686" width="6" height="3" fill="rgb(160, 195, 170)" opacity="0.56" transform="rotate(104 973 687)"/><rect x="819" y="378" width="10" height="3" fill="rgb(215, 160, 140)" opacity="0.58" transform="rotate(122 824 380)"/><rect x="492" y="311" width="9" height="4" fill="rgb(160, 195, 170)" opacity="0.46" transform="rotate(56 497 313)"/><rect x="1150" y="398" width="5" height="4" fill="rgb(185, 200, 190)" opacity="0.59" transform="rotate(62 1153 400)"/><rect x="1216" y="354" width="7" height="3" fill="rgb(225, 215, 200)" opacity="0.59" transform="rotate(89 1219 356)"/><rect x="1143" y="279" width="5" height="3" fill="rgb(200, 185, 185)" opacity="0.64" transform="rotate(115 1146 280)"/><rect x="1155" y="416" width="7" height="3" fill="rgb(170, 180, 210)" opacity="0.62" transform="rotate(144 1158 417)"/><rect x="918" y="464" width="6" height="3" fill="rgb(205, 130, 130)" opacity="0.61" transform="rotate(18 921 466)"/><rect x="1223" y="380" width="7" height="3" fill="rgb(205, 130, 130)" opacity="0.75" transform="rotate(151 1227 382)"/><rect x="759" y="256" width="7" height="3" fill="rgb(215, 160, 140)" opacity="0.66" transform="rotate(120 762 257)"/><rect x="1077" y="212" width="9" height="4" fill="rgb(70, 65, 95)" opacity="0.52" transform="rotate(32 1081 214)"/><rect x="1244" y="464" width="7" height="4" fill="rgb(160, 195, 170)" opacity="0.75" transform="rotate(110 1248 466)"/><rect x="919" y="396" width="8" height="3" fill="rgb(160, 195, 170)" opacity="0.52" transform="rotate(177 923 397)"/><rect x="1109" y="650" width="9" height="4" fill="rgb(215, 160, 140)" opacity="0.68" transform="rotate(112 1114 652)"/><rect x="852" y="298" width="7" height="3" fill="rgb(200, 185, 185)" opacity="0.62" transform="rotate(135 855 300)"/><rect x="1279" y="364" width="7" height="3" fill="rgb(200, 185, 185)" opacity="0.74" transform="rotate(64 1283 365)"/><rect x="1011" y="645" width="6" height="3" fill="rgb(70, 65, 95)" opacity="0.50" transform="rotate(78 1013 647)"/><rect x="1098" y="638" width="8" height="4" fill="rgb(200, 185, 185)" opacity="0.75" transform="rotate(60 1102 640)"/><rect x="539" y="176" width="9" height="3" fill="rgb(70, 65, 95)" opacity="0.43" transform="rotate(50 544 178)"/><rect x="1268" y="572" width="5" height="4" fill="rgb(225, 215, 200)" opacity="0.48" transform="rotate(95 1270 574)"/><rect x="822" y="385" width="7" height="3" fill="rgb(205, 130, 130)" opacity="0.51" transform="rotate(9 826 386)"/><rect x="1260" y="211" width="8" height="3" fill="rgb(70, 65, 95)" opacity="0.75" transform="rotate(166 1264 212)"/><rect x="1185" y="514" width="7" height="3" fill="rgb(225, 215, 200)" opacity="0.62" transform="rotate(113 1189 516)"/><rect x="941" y="450" width="5" height="3" fill="rgb(215, 160, 140)" opacity="0.47" transform="rotate(178 943 451)"/><rect x="1368" y="387" width="8" height="4" fill="rgb(200, 185, 185)" opacity="0.67" transform="rotate(48 1372 389)"/><rect x="736" y="481" width="6" height="3" fill="rgb(200, 185, 185)" opacity="0.61" transform="rotate(172 739 483)"/><rect x="1228" y="440" width="8" height="4" fill="rgb(70, 65, 95)" opacity="0.62" transform="rotate(179 1232 442)"/><rect x="962" y="286" width="8" height="4" fill="rgb(200, 185, 185)" opacity="0.43" transform="rotate(111 967 288)"/><rect x="812" y="394" width="8" height="3" fill="rgb(160, 195, 170)" opacity="0.68" transform="rotate(69 816 396)"/><rect x="857" y="369" width="6" height="4" fill="rgb(205, 130, 130)" opacity="0.75" transform="rotate(178 860 370)"/><rect x="838" y="335" width="5" height="4" fill="rgb(160, 195, 170)" opacity="0.68" transform="rotate(130 840 337)"/><rect x="1075" y="367" width="5" height="3" fill="rgb(170, 180, 210)" opacity="0.54" transform="rotate(48 1078 369)"/><rect x="739" y="502" width="7" height="3" fill="rgb(225, 215, 200)" opacity="0.64" transform="rotate(74 742 504)"/><rect x="1289" y="568" width="8" height="3" fill="rgb(160, 195, 170)" opacity="0.74" transform="rotate(119 1293 570)"/><rect x="1119" y="487" width="6" height="3" fill="rgb(70, 65, 95)" opacity="0.57" transform="rotate(108 1122 489)"/><rect x="877" y="350" width="9" height="3" fill="rgb(205, 130, 130)" opacity="0.61" transform="rotate(176 881 352)"/><rect x="630" y="620" width="7" height="3" fill="rgb(160, 195, 170)" opacity="0.48" transform="rotate(16 633 621)"/><rect x="1253" y="511" width="9" height="4" fill="rgb(205, 130, 130)" opacity="0.68" transform="rotate(70 1258 513)"/><rect x="817" y="384" width="9" height="3" fill="rgb(200, 185, 185)" opacity="0.45" transform="rotate(98 821 386)"/><rect x="1010" y="308" width="9" height="4" fill="rgb(205, 130, 130)" opacity="0.60" transform="rotate(49 1014 310)"/><rect x="832" y="441" width="8" height="4" fill="rgb(225, 215, 200)" opacity="0.74" transform="rotate(119 836 443)"/><rect x="1310" y="393" width="5" height="3" fill="rgb(70, 65, 95)" opacity="0.62" transform="rotate(83 1313 394)"/><rect x="1176" y="398" width="9" height="3" fill="rgb(215, 160, 140)" opacity="0.66" transform="rotate(54 1180 400)"/><rect x="1078" y="309" width="6" height="3" fill="rgb(200, 185, 185)" opacity="0.61" transform="rotate(97 1081 311)"/><rect x="783" y="530" width="9" height="3" fill="rgb(170, 180, 210)" opacity="0.48" transform="rotate(150 787 531)"/><rect x="1470" y="491" width="8" height="3" fill="rgb(200, 185, 185)" opacity="0.59" transform="rotate(34 1474 492)"/><rect x="952" y="404" width="9" height="4" fill="rgb(205, 130, 130)" opacity="0.67" transform="rotate(38 957 406)"/><rect x="726" y="701" width="6" height="3" fill="rgb(70, 65, 95)" opacity="0.75" transform="rotate(56 729 703)"/><rect x="1016" y="320" width="8" height="3" fill="rgb(205, 130, 130)" opacity="0.46" transform="rotate(99 1019 322)"/><rect x="1176" y="408" width="7" height="3" fill="rgb(215, 160, 140)" opacity="0.58" transform="rotate(149 1180 409)"/><rect x="802" y="354" width="9" height="3" fill="rgb(70, 65, 95)" opacity="0.54" transform="rotate(154 807 355)"/><rect x="1021" y="675" width="5" height="4" fill="rgb(200, 185, 185)" opacity="0.44" transform="rotate(11 1024 677)"/><rect x="1176" y="477" width="10" height="3" fill="rgb(185, 200, 190)" opacity="0.70" transform="rotate(155 1181 478)"/><rect x="533" y="601" width="8" height="3" fill="rgb(215, 160, 140)" opacity="0.66" transform="rotate(8 537 602)"/><rect x="858" y="590" width="6" height="3" fill="rgb(205, 130, 130)" opacity="0.40" transform="rotate(64 862 591)"/><rect x="1145" y="380" width="5" height="3" fill="rgb(215, 160, 140)" opacity="0.50" transform="rotate(75 1147 382)"/><rect x="1309" y="627" width="7" height="3" fill="rgb(70, 65, 95)" opacity="0.66" transform="rotate(56 1312 629)"/><rect x="734" y="438" width="7" height="3" fill="rgb(170, 180, 210)" opacity="0.51" transform="rotate(84 738 440)"/><rect x="905" y="582" width="8" height="3" fill="rgb(170, 180, 210)" opacity="0.54" transform="rotate(82 909 583)"/><rect x="1231" y="349" width="7" height="3" fill="rgb(185, 200, 190)" opacity="0.55" transform="rotate(170 1235 351)"/><rect x="522" y="337" width="10" height="4" fill="rgb(185, 200, 190)" opacity="0.44" transform="rotate(150 527 339)"/><rect x="768" y="409" width="7" height="3" fill="rgb(225, 215, 200)" opacity="0.60" transform="rotate(7 772 411)"/><rect x="1061" y="435" width="10" height="3" fill="rgb(160, 195, 170)" opacity="0.67" transform="rotate(27 1066 436)"/><rect x="971" y="275" width="10" height="4" fill="rgb(200, 185, 185)" opacity="0.62" transform="rotate(106 976 277)"/><rect x="1089" y="587" width="10" height="4" fill="rgb(70, 65, 95)" opacity="0.65" transform="rotate(39 1094 588)"/><rect x="1236" y="19" width="10" height="3" fill="rgb(170, 180, 210)" opacity="0.63" transform="rotate(2 1241 21)"/><rect x="981" y="567" width="6" height="4" fill="rgb(215, 160, 140)" opacity="0.50" transform="rotate(94 984 569)"/><rect x="1116" y="217" width="9" height="3" fill="rgb(215, 160, 140)" opacity="0.70" transform="rotate(6 1120 219)"/><rect x="719" y="254" width="9" height="3" fill="rgb(225, 215, 200)" opacity="0.74" transform="rotate(177 724 256)"/><rect x="962" y="307" width="6" height="3" fill="rgb(225, 215, 200)" opacity="0.55" transform="rotate(123 965 309)"/><rect x="1049" y="336" width="9" height="3" fill="rgb(200, 185, 185)" opacity="0.49" transform="rotate(89 1053 338)"/><rect x="933" y="389" width="6" height="3" fill="rgb(185, 200, 190)" opacity="0.77" transform="rotate(52 936 391)"/><rect x="815" y="254" width="7" height="4" fill="rgb(200, 185, 185)" opacity="0.56" transform="rotate(89 819 255)"/><rect x="872" y="398" width="6" height="3" fill="rgb(205, 130, 130)" opacity="0.61" transform="rotate(65 875 400)"/><rect x="548" y="668" width="8" height="3" fill="rgb(200, 185, 185)" opacity="0.59" transform="rotate(37 552 670)"/><rect x="1001" y="246" width="6" height="3" fill="rgb(185, 200, 190)" opacity="0.61" transform="rotate(130 1004 247)"/><rect x="1089" y="419" width="7" height="3" fill="rgb(160, 195, 170)" opacity="0.68" transform="rotate(78 1093 421)"/><rect x="998" y="199" width="5" height="4" fill="rgb(215, 160, 140)" opacity="0.63" transform="rotate(27 1000 200)"/><rect x="1107" y="371" width="8" height="3" fill="rgb(215, 160, 140)" opacity="0.72" transform="rotate(128 1111 372)"/><rect x="561" y="240" width="5" height="3" fill="rgb(170, 180, 210)" opacity="0.57" transform="rotate(52 564 241)"/><rect x="888" y="461" width="8" height="3" fill="rgb(160, 195, 170)" opacity="0.56" transform="rotate(149 892 463)"/><rect x="697" y="611" width="5" height="3" fill="rgb(200, 185, 185)" opacity="0.47" transform="rotate(55 700 612)"/><rect x="954" y="456" width="9" height="3" fill="rgb(225, 215, 200)" opacity="0.76" transform="rotate(71 959 458)"/><rect x="1123" y="547" width="9" height="3" fill="rgb(200, 185, 185)" opacity="0.50" transform="rotate(127 1128 549)"/><rect x="920" y="546" width="10" height="3" fill="rgb(215, 160, 140)" opacity="0.64" transform="rotate(132 925 547)"/><rect x="1111" y="336" width="6" height="3" fill="rgb(160, 195, 170)" opacity="0.73" transform="rotate(22 1114 337)"/><rect x="767" y="594" width="10" height="4" fill="rgb(225, 215, 200)" opacity="0.78" transform="rotate(104 772 596)"/><rect x="1149" y="253" width="10" height="3" fill="rgb(185, 200, 190)" opacity="0.45" transform="rotate(73 1154 254)"/><rect x="987" y="386" width="8" height="3" fill="rgb(160, 195, 170)" opacity="0.47" transform="rotate(58 991 387)"/><rect x="541" y="534" width="10" height="3" fill="rgb(170, 180, 210)" opacity="0.61" transform="rotate(66 546 536)"/><rect x="953" y="584" width="8" height="4" fill="rgb(200, 185, 185)" opacity="0.64" transform="rotate(21 957 586)"/><rect x="808" y="308" width="8" height="3" fill="rgb(170, 180, 210)" opacity="0.70" transform="rotate(78 812 309)"/><rect x="1084" y="589" width="7" height="4" fill="rgb(160, 195, 170)" opacity="0.49" transform="rotate(48 1087 590)"/><rect x="905" y="180" width="8" height="3" fill="rgb(170, 180, 210)" opacity="0.45" transform="rotate(165 909 182)"/><rect x="687" y="305" width="7" height="4" fill="rgb(170, 180, 210)" opacity="0.62" transform="rotate(98 691 307)"/><rect x="697" y="89" width="5" height="3" fill="rgb(70, 65, 95)" opacity="0.66" transform="rotate(6 699 90)"/><rect x="965" y="553" width="7" height="4" fill="rgb(200, 185, 185)" opacity="0.64" transform="rotate(169 968 555)"/><rect x="1136" y="456" width="5" height="3" fill="rgb(205, 130, 130)" opacity="0.45" transform="rotate(12 1139 457)"/><rect x="630" y="269" width="7" height="3" fill="rgb(205, 130, 130)" opacity="0.74" transform="rotate(121 634 271)"/><rect x="684" y="372" width="9" height="4" fill="rgb(225, 215, 200)" opacity="0.57" transform="rotate(175 689 374)"/><rect x="918" y="592" width="6" height="3" fill="rgb(70, 65, 95)" opacity="0.63" transform="rotate(153 921 594)"/><rect x="698" y="428" width="5" height="3" fill="rgb(185, 200, 190)" opacity="0.78" transform="rotate(109 701 429)"/><rect x="1022" y="319" width="7" height="3" fill="rgb(160, 195, 170)" opacity="0.77" transform="rotate(145 1026 320)"/><rect x="762" y="121" width="8" height="4" fill="rgb(185, 200, 190)" opacity="0.42" transform="rotate(15 766 123)"/><rect x="895" y="475" width="8" height="3" fill="rgb(160, 195, 170)" opacity="0.44" transform="rotate(27 899 476)"/><rect x="987" y="523" width="8" height="3" fill="rgb(170, 180, 210)" opacity="0.68" transform="rotate(69 991 524)"/><rect x="1112" y="440" width="6" height="3" fill="rgb(185, 200, 190)" opacity="0.62" transform="rotate(20 1115 442)"/><rect x="1089" y="550" width="6" height="4" fill="rgb(200, 185, 185)" opacity="0.53" transform="rotate(51 1092 552)"/><rect x="1220" y="644" width="6" height="3" fill="rgb(70, 65, 95)" opacity="0.55" transform="rotate(117 1223 645)"/><rect x="1313" y="316" width="9" height="4" fill="rgb(70, 65, 95)" opacity="0.51" transform="rotate(32 1318 318)"/><rect x="1107" y="388" width="8" height="3" fill="rgb(70, 65, 95)" opacity="0.63" transform="rotate(166 1111 389)"/><rect x="812" y="656" width="10" height="4" fill="rgb(170, 180, 210)" opacity="0.45" transform="rotate(7 817 658)"/><rect x="1086" y="353" width="8" height="3" fill="rgb(225, 215, 200)" opacity="0.69" transform="rotate(30 1090 355)"/><rect x="846" y="572" width="8" height="4" fill="rgb(185, 200, 190)" opacity="0.59" transform="rotate(83 851 574)"/><rect x="992" y="549" width="7" height="4" fill="rgb(170, 180, 210)" opacity="0.54" transform="rotate(87 995 551)"/><rect x="876" y="390" width="9" height="3" fill="rgb(160, 195, 170)" opacity="0.55" transform="rotate(110 880 392)"/><rect x="839" y="322" width="7" height="3" fill="rgb(205, 130, 130)" opacity="0.58" transform="rotate(117 842 323)"/><rect x="802" y="394" width="8" height="3" fill="rgb(200, 185, 185)" opacity="0.50" transform="rotate(52 806 396)"/><rect x="928" y="501" width="9" height="4" fill="rgb(160, 195, 170)" opacity="0.64" transform="rotate(54 933 503)"/><rect x="771" y="39" width="8" height="3" fill="rgb(70, 65, 95)" opacity="0.49" transform="rotate(96 775 40)"/><rect x="1126" y="341" width="7" height="3" fill="rgb(160, 195, 170)" opacity="0.71" transform="rotate(52 1129 343)"/><rect x="882" y="599" width="6" height="3" fill="rgb(70, 65, 95)" opacity="0.47" transform="rotate(140 885 601)"/><rect x="1038" y="479" width="9" height="3" fill="rgb(70, 65, 95)" opacity="0.58" transform="rotate(3 1042 481)"/><rect x="770" y="448" width="8" height="3" fill="rgb(215, 160, 140)" opacity="0.54" transform="rotate(46 774 450)"/><rect x="1380" y="297" width="8" height="3" fill="rgb(185, 200, 190)" opacity="0.47" transform="rotate(145 1384 299)"/><rect x="821" y="291" width="6" height="3" fill="rgb(205, 130, 130)" opacity="0.62" transform="rotate(54 824 292)"/><rect x="1430" y="212" width="9" height="3" fill="rgb(205, 130, 130)" opacity="0.65" transform="rotate(85 1435 214)"/><rect x="1126" y="593" width="7" height="3" fill="rgb(70, 65, 95)" opacity="0.44" transform="rotate(128 1129 594)"/><rect x="1016" y="475" width="6" height="4" fill="rgb(70, 65, 95)" opacity="0.45" transform="rotate(56 1019 477)"/><rect x="1117" y="609" width="8" height="3" fill="rgb(205, 130, 130)" opacity="0.71" transform="rotate(19 1122 611)"/><rect x="1262" y="439" width="5" height="4" fill="rgb(225, 215, 200)" opacity="0.65" transform="rotate(12 1265 441)"/><rect x="779" y="219" width="6" height="3" fill="rgb(160, 195, 170)" opacity="0.58" transform="rotate(118 782 221)"/><rect x="956" y="663" width="6" height="3" fill="rgb(70, 65, 95)" opacity="0.40" transform="rotate(36 959 665)"/><rect x="1407" y="416" width="7" height="3" fill="rgb(70, 65, 95)" opacity="0.47" transform="rotate(149 1410 417)"/><rect x="986" y="162" width="10" height="3" fill="rgb(215, 160, 140)" opacity="0.56" transform="rotate(22 991 163)"/><rect x="1058" y="403" width="5" height="4" fill="rgb(185, 200, 190)" opacity="0.49" transform="rotate(163 1060 405)"/><rect x="752" y="246" width="9" height="3" fill="rgb(70, 65, 95)" opacity="0.70" transform="rotate(82 756 248)"/><rect x="1044" y="267" width="10" height="4" fill="rgb(215, 160, 140)" opacity="0.46" transform="rotate(175 1049 269)"/><rect x="678" y="407" width="10" height="3" fill="rgb(170, 180, 210)" opacity="0.72" transform="rotate(161 683 409)"/><rect x="1169" y="463" width="7" height="3" fill="rgb(160, 195, 170)" opacity="0.53" transform="rotate(25 1172 465)"/><rect x="1056" y="564" width="7" height="4" fill="rgb(185, 200, 190)" opacity="0.48" transform="rotate(34 1059 566)"/><rect x="785" y="555" width="5" height="4" fill="rgb(70, 65, 95)" opacity="0.53" transform="rotate(8 788 557)"/><rect x="570" y="485" width="6" height="4" fill="rgb(205, 130, 130)" opacity="0.76" transform="rotate(166 573 487)"/><rect x="1100" y="404" width="10" height="3" fill="rgb(185, 200, 190)" opacity="0.57" transform="rotate(145 1105 405)"/><rect x="1046" y="405" width="8" height="3" fill="rgb(160, 195, 170)" opacity="0.73" transform="rotate(16 1050 406)"/><rect x="898" y="436" width="6" height="3" fill="rgb(185, 200, 190)" opacity="0.63" transform="rotate(75 901 437)"/><rect x="1009" y="386" width="6" height="4" fill="rgb(170, 180, 210)" opacity="0.59" transform="rotate(61 1012 388)"/><rect x="1003" y="312" width="6" height="3" fill="rgb(225, 215, 200)" opacity="0.54" transform="rotate(167 1006 313)"/><rect x="904" y="451" width="8" height="4" fill="rgb(200, 185, 185)" opacity="0.40" transform="rotate(17 908 452)"/><rect x="979" y="351" width="6" height="4" fill="rgb(200, 185, 185)" opacity="0.54" transform="rotate(107 982 352)"/><rect x="709" y="502" width="5" height="3" fill="rgb(70, 65, 95)" opacity="0.44" transform="rotate(141 711 503)"/><rect x="834" y="516" width="7" height="4" fill="rgb(215, 160, 140)" opacity="0.66" transform="rotate(126 837 518)"/><rect x="695" y="483" width="8" height="3" fill="rgb(200, 185, 185)" opacity="0.72" transform="rotate(147 699 484)"/><rect x="1103" y="273" width="8" height="4" fill="rgb(215, 160, 140)" opacity="0.54" transform="rotate(108 1107 275)"/><rect x="1102" y="410" width="8" height="3" fill="rgb(70, 65, 95)" opacity="0.44" transform="rotate(136 1106 411)"/><rect x="688" y="232" width="7" height="3" fill="rgb(160, 195, 170)" opacity="0.73" transform="rotate(161 691 233)"/><rect x="1004" y="320" width="5" height="4" fill="rgb(200, 185, 185)" opacity="0.62" transform="rotate(132 1006 321)"/><rect x="943" y="381" width="7" height="3" fill="rgb(160, 195, 170)" opacity="0.76" transform="rotate(31 947 383)"/><rect x="1149" y="553" width="6" height="4" fill="rgb(205, 130, 130)" opacity="0.55" transform="rotate(20 1153 555)"/><rect x="693" y="421" width="6" height="3" fill="rgb(170, 180, 210)" opacity="0.67" transform="rotate(3 696 423)"/><rect x="614" y="465" width="8" height="3" fill="rgb(215, 160, 140)" opacity="0.43" transform="rotate(118 619 466)"/><rect x="1064" y="674" width="9" height="3" fill="rgb(170, 180, 210)" opacity="0.44" transform="rotate(43 1069 675)"/><rect x="1380" y="587" width="8" height="3" fill="rgb(70, 65, 95)" opacity="0.45" transform="rotate(50 1384 589)"/><rect x="672" y="702" width="9" height="4" fill="rgb(205, 130, 130)" opacity="0.68" transform="rotate(108 676 704)"/><rect x="1086" y="526" width="10" height="3" fill="rgb(185, 200, 190)" opacity="0.76" transform="rotate(134 1091 527)"/><rect x="1364" y="308" width="9" height="4" fill="rgb(185, 200, 190)" opacity="0.74" transform="rotate(102 1368 310)"/><rect x="1321" y="340" width="5" height="3" fill="rgb(70, 65, 95)" opacity="0.42" transform="rotate(92 1323 341)"/><rect x="668" y="322" width="9" height="3" fill="rgb(160, 195, 170)" opacity="0.54" transform="rotate(57 673 324)"/><rect x="915" y="395" width="10" height="4" fill="rgb(70, 65, 95)" opacity="0.76" transform="rotate(144 920 397)"/><rect x="1117" y="569" width="9" height="4" fill="rgb(160, 195, 170)" opacity="0.75" transform="rotate(28 1121 571)"/><rect x="1034" y="368" width="10" height="4" fill="rgb(215, 160, 140)" opacity="0.66" transform="rotate(106 1039 370)"/><rect x="1430" y="477" width="8" height="4" fill="rgb(205, 130, 130)" opacity="0.43" transform="rotate(110 1434 479)"/><rect x="834" y="331" width="10" height="4" fill="rgb(200, 185, 185)" opacity="0.65" transform="rotate(99 838 333)"/><rect x="642" y="269" width="10" height="4" fill="rgb(70, 65, 95)" opacity="0.70" transform="rotate(178 647 271)"/><rect x="721" y="317" width="6" height="4" fill="rgb(200, 185, 185)" opacity="0.40" transform="rotate(66 724 319)"/><rect x="1126" y="255" width="10" height="3" fill="rgb(170, 180, 210)" opacity="0.58" transform="rotate(153 1131 256)"/><rect x="1157" y="348" width="5" height="3" fill="rgb(160, 195, 170)" opacity="0.52" transform="rotate(63 1160 349)"/><rect x="1402" y="559" width="8" height="4" fill="rgb(185, 200, 190)" opacity="0.63" transform="rotate(134 1406 561)"/><rect x="605" y="564" width="7" height="4" fill="rgb(225, 215, 200)" opacity="0.49" transform="rotate(35 609 566)"/><rect x="1164" y="450" width="9" height="3" fill="rgb(225, 215, 200)" opacity="0.67" transform="rotate(88 1169 451)"/><rect x="823" y="558" width="9" height="4" fill="rgb(215, 160, 140)" opacity="0.73" transform="rotate(140 827 560)"/><rect x="968" y="388" width="6" height="4" fill="rgb(215, 160, 140)" opacity="0.71" transform="rotate(151 971 390)"/><rect x="1163" y="540" width="7" height="3" fill="rgb(225, 215, 200)" opacity="0.42" transform="rotate(56 1167 542)"/><rect x="573" y="541" width="9" height="3" fill="rgb(215, 160, 140)" opacity="0.51" transform="rotate(17 577 542)"/><rect x="813" y="356" width="8" height="4" fill="rgb(225, 215, 200)" opacity="0.74" transform="rotate(178 817 358)"/><rect x="775" y="597" width="9" height="3" fill="rgb(215, 160, 140)" opacity="0.49" transform="rotate(92 780 598)"/><rect x="917" y="243" width="9" height="3" fill="rgb(70, 65, 95)" opacity="0.73" transform="rotate(152 921 244)"/><rect x="721" y="443" width="6" height="3" fill="rgb(70, 65, 95)" opacity="0.66" transform="rotate(1 724 445)"/><rect x="1244" y="599" width="9" height="3" fill="rgb(215, 160, 140)" opacity="0.56" transform="rotate(139 1248 600)"/><rect x="789" y="419" width="6" height="4" fill="rgb(160, 195, 170)" opacity="0.54" transform="rotate(63 793 421)"/><rect x="975" y="446" width="10" height="4" fill="rgb(70, 65, 95)" opacity="0.42" transform="rotate(177 979 447)"/><rect x="1009" y="479" width="8" height="3" fill="rgb(225, 215, 200)" opacity="0.50" transform="rotate(172 1013 481)"/><rect x="1008" y="453" width="9" height="3" fill="rgb(160, 195, 170)" opacity="0.54" transform="rotate(105 1013 455)"/><rect x="1161" y="399" width="9" height="3" fill="rgb(200, 185, 185)" opacity="0.54" transform="rotate(19 1165 401)"/><rect x="770" y="316" width="6" height="3" fill="rgb(170, 180, 210)" opacity="0.49" transform="rotate(58 773 317)"/><rect x="1421" y="267" width="8" height="3" fill="rgb(170, 180, 210)" opacity="0.43" transform="rotate(66 1425 268)"/><rect x="951" y="481" width="9" height="3" fill="rgb(205, 130, 130)" opacity="0.42" transform="rotate(15 956 482)"/><rect x="1131" y="403" width="9" height="3" fill="rgb(225, 215, 200)" opacity="0.42" transform="rotate(65 1136 404)"/><rect x="582" y="536" width="6" height="4" fill="rgb(160, 195, 170)" opacity="0.71" transform="rotate(44 585 538)"/><rect x="944" y="626" width="7" height="3" fill="rgb(215, 160, 140)" opacity="0.66" transform="rotate(81 947 627)"/><rect x="997" y="537" width="7" height="3" fill="rgb(185, 200, 190)" opacity="0.59" transform="rotate(100 1000 539)"/><rect x="717" y="686" width="8" height="3" fill="rgb(70, 65, 95)" opacity="0.73" transform="rotate(114 721 687)"/><rect x="1148" y="650" width="10" height="3" fill="rgb(215, 160, 140)" opacity="0.58" transform="rotate(1 1153 652)"/><rect x="717" y="678" width="9" height="3" fill="rgb(200, 185, 185)" opacity="0.45" transform="rotate(172 721 679)"/><rect x="1177" y="588" width="8" height="4" fill="rgb(215, 160, 140)" opacity="0.62" transform="rotate(149 1181 590)"/><rect x="750" y="484" width="8" height="3" fill="rgb(70, 65, 95)" opacity="0.74" transform="rotate(29 753 486)"/><rect x="1074" y="599" width="9" height="4" fill="rgb(170, 180, 210)" opacity="0.42" transform="rotate(57 1078 601)"/><rect x="993" y="269" width="10" height="3" fill="rgb(225, 215, 200)" opacity="0.69" transform="rotate(78 998 271)"/><rect x="1358" y="209" width="6" height="3" fill="rgb(215, 160, 140)" opacity="0.61" transform="rotate(11 1361 211)"/><rect x="756" y="407" width="10" height="4" fill="rgb(170, 180, 210)" opacity="0.68" transform="rotate(86 761 409)"/><rect x="1125" y="307" width="7" height="3" fill="rgb(160, 195, 170)" opacity="0.71" transform="rotate(142 1129 308)"/><rect x="815" y="222" width="6" height="3" fill="rgb(185, 200, 190)" opacity="0.45" transform="rotate(118 818 223)"/><rect x="1118" y="256" width="9" height="3" fill="rgb(225, 215, 200)" opacity="0.75" transform="rotate(29 1122 258)"/><rect x="556" y="200" width="8" height="3" fill="rgb(205, 130, 130)" opacity="0.56" transform="rotate(4 560 201)"/><rect x="1279" y="140" width="8" height="3" fill="rgb(205, 130, 130)" opacity="0.56" transform="rotate(8 1283 142)"/><rect x="1114" y="396" width="6" height="3" fill="rgb(160, 195, 170)" opacity="0.46" transform="rotate(5 1117 397)"/><rect x="1272" y="457" width="6" height="3" fill="rgb(225, 215, 200)" opacity="0.68" transform="rotate(164 1275 459)"/><rect x="806" y="394" width="6" height="4" fill="rgb(170, 180, 210)" opacity="0.74" transform="rotate(146 809 396)"/><rect x="817" y="381" width="8" height="3" fill="rgb(200, 185, 185)" opacity="0.62" transform="rotate(20 821 383)"/><rect x="973" y="494" width="6" height="4" fill="rgb(70, 65, 95)" opacity="0.50" transform="rotate(161 976 496)"/><rect x="621" y="702" width="9" height="4" fill="rgb(170, 180, 210)" opacity="0.64" transform="rotate(176 626 704)"/><rect x="795" y="373" width="7" height="3" fill="rgb(160, 195, 170)" opacity="0.73" transform="rotate(44 798 374)"/><rect x="942" y="333" width="5" height="3" fill="rgb(225, 215, 200)" opacity="0.60" transform="rotate(78 945 335)"/><rect x="741" y="321" width="8" height="3" fill="rgb(170, 180, 210)" opacity="0.51" transform="rotate(99 745 323)"/><rect x="795" y="379" width="6" height="4" fill="rgb(160, 195, 170)" opacity="0.60" transform="rotate(4 798 381)"/><rect x="832" y="465" width="9" height="3" fill="rgb(225, 215, 200)" opacity="0.71" transform="rotate(41 837 467)"/><rect x="1310" y="449" width="6" height="4" fill="rgb(70, 65, 95)" opacity="0.58" transform="rotate(105 1313 450)"/><rect x="1144" y="576" width="8" height="3" fill="rgb(185, 200, 190)" opacity="0.62" transform="rotate(50 1148 578)"/><rect x="1285" y="405" width="8" height="4" fill="rgb(205, 130, 130)" opacity="0.69" transform="rotate(52 1289 407)"/><rect x="487" y="453" width="8" height="3" fill="rgb(70, 65, 95)" opacity="0.60" transform="rotate(26 491 454)"/><rect x="900" y="513" width="7" height="3" fill="rgb(170, 180, 210)" opacity="0.70" transform="rotate(57 904 514)"/><rect x="622" y="535" width="8" height="3" fill="rgb(225, 215, 200)" opacity="0.43" transform="rotate(99 626 536)"/><rect x="809" y="230" width="7" height="4" fill="rgb(215, 160, 140)" opacity="0.55" transform="rotate(87 812 232)"/><rect x="831" y="352" width="5" height="3" fill="rgb(215, 160, 140)" opacity="0.46" transform="rotate(146 834 354)"/><rect x="1359" y="595" width="5" height="4" fill="rgb(70, 65, 95)" opacity="0.43" transform="rotate(164 1361 597)"/><rect x="1106" y="48" width="9" height="3" fill="rgb(185, 200, 190)" opacity="0.63" transform="rotate(51 1110 49)"/><rect x="1394" y="409" width="5" height="3" fill="rgb(170, 180, 210)" opacity="0.76" transform="rotate(76 1397 410)"/><rect x="822" y="369" width="8" height="4" fill="rgb(170, 180, 210)" opacity="0.59" transform="rotate(8 826 371)"/><rect x="940" y="524" width="6" height="3" fill="rgb(225, 215, 200)" opacity="0.58" transform="rotate(76 943 526)"/><rect x="759" y="276" width="10" height="3" fill="rgb(205, 130, 130)" opacity="0.54" transform="rotate(111 764 278)"/><rect x="721" y="307" width="7" height="4" fill="rgb(160, 195, 170)" opacity="0.62" transform="rotate(71 725 309)"/><rect x="684" y="411" width="8" height="4" fill="rgb(185, 200, 190)" opacity="0.54" transform="rotate(134 688 413)"/><rect x="1171" y="566" width="9" height="4" fill="rgb(215, 160, 140)" opacity="0.75" transform="rotate(174 1176 568)"/><rect x="1172" y="541" width="10" height="3" fill="rgb(160, 195, 170)" opacity="0.52" transform="rotate(123 1177 542)"/><rect x="701" y="202" width="8" height="4" fill="rgb(170, 180, 210)" opacity="0.58" transform="rotate(121 705 204)"/><rect x="735" y="622" width="7" height="3" fill="rgb(215, 160, 140)" opacity="0.59" transform="rotate(40 738 623)"/><rect x="1034" y="326" width="8" height="3" fill="rgb(215, 160, 140)" opacity="0.53" transform="rotate(43 1038 327)"/><rect x="887" y="480" width="5" height="4" fill="rgb(200, 185, 185)" opacity="0.53" transform="rotate(47 890 482)"/><rect x="1225" y="435" width="8" height="3" fill="rgb(185, 200, 190)" opacity="0.73" transform="rotate(15 1228 436)"/><rect x="1025" y="467" width="5" height="4" fill="rgb(70, 65, 95)" opacity="0.52" transform="rotate(143 1028 468)"/><rect x="525" y="509" width="8" height="3" fill="rgb(170, 180, 210)" opacity="0.67" transform="rotate(129 529 510)"/><rect x="1184" y="214" width="6" height="4" fill="rgb(215, 160, 140)" opacity="0.43" transform="rotate(19 1187 216)"/><rect x="1026" y="646" width="6" height="3" fill="rgb(70, 65, 95)" opacity="0.50" transform="rotate(67 1030 647)"/><rect x="950" y="591" width="9" height="3" fill="rgb(185, 200, 190)" opacity="0.60" transform="rotate(73 955 592)"/><rect x="828" y="556" width="9" height="3" fill="rgb(215, 160, 140)" opacity="0.57" transform="rotate(87 833 557)"/><rect x="561" y="284" width="5" height="3" fill="rgb(160, 195, 170)" opacity="0.60" transform="rotate(94 564 286)"/><rect x="724" y="613" width="7" height="3" fill="rgb(160, 195, 170)" opacity="0.76" transform="rotate(136 728 614)"/><rect x="598" y="469" width="6" height="3" fill="rgb(170, 180, 210)" opacity="0.72" transform="rotate(21 601 471)"/><rect x="971" y="357" width="8" height="3" fill="rgb(70, 65, 95)" opacity="0.65" transform="rotate(131 975 359)"/><rect x="1349" y="511" width="5" height="3" fill="rgb(170, 180, 210)" opacity="0.58" transform="rotate(140 1351 512)"/><rect x="1269" y="460" width="6" height="3" fill="rgb(170, 180, 210)" opacity="0.51" transform="rotate(40 1272 461)"/><rect x="1036" y="268" width="7" height="3" fill="rgb(70, 65, 95)" opacity="0.56" transform="rotate(104 1039 270)"/><rect x="1125" y="283" width="9" height="4" fill="rgb(170, 180, 210)" opacity="0.62" transform="rotate(149 1130 285)"/><rect x="1143" y="491" width="8" height="3" fill="rgb(205, 130, 130)" opacity="0.56" transform="rotate(79 1147 492)"/><rect x="984" y="565" width="8" height="4" fill="rgb(205, 130, 130)" opacity="0.59" transform="rotate(57 988 567)"/><rect x="1245" y="518" width="9" height="3" fill="rgb(160, 195, 170)" opacity="0.57" transform="rotate(100 1250 520)"/><rect x="656" y="510" width="7" height="4" fill="rgb(160, 195, 170)" opacity="0.54" transform="rotate(75 660 512)"/><rect x="1157" y="446" width="7" height="4" fill="rgb(185, 200, 190)" opacity="0.70" transform="rotate(25 1160 448)"/><rect x="962" y="468" width="9" height="3" fill="rgb(215, 160, 140)" opacity="0.74" transform="rotate(54 967 469)"/><rect x="1289" y="295" width="6" height="3" fill="rgb(215, 160, 140)" opacity="0.57" transform="rotate(133 1292 296)"/><rect x="1041" y="9" width="8" height="3" fill="rgb(70, 65, 95)" opacity="0.76" transform="rotate(106 1045 11)"/><rect x="919" y="247" width="9" height="3" fill="rgb(185, 200, 190)" opacity="0.63" transform="rotate(53 924 248)"/><rect x="1306" y="375" width="5" height="4" fill="rgb(170, 180, 210)" opacity="0.73" transform="rotate(84 1308 377)"/><rect x="848" y="429" width="8" height="3" fill="rgb(170, 180, 210)" opacity="0.58" transform="rotate(105 852 431)"/><rect x="791" y="597" width="6" height="3" fill="rgb(200, 185, 185)" opacity="0.64" transform="rotate(21 794 599)"/><rect x="627" y="505" width="9" height="3" fill="rgb(205, 130, 130)" opacity="0.51" transform="rotate(67 631 506)"/><rect x="1142" y="356" width="9" height="3" fill="rgb(160, 195, 170)" opacity="0.47" transform="rotate(171 1146 358)"/><rect x="956" y="352" width="7" height="3" fill="rgb(205, 130, 130)" opacity="0.49" transform="rotate(60 960 353)"/><rect x="1157" y="623" width="6" height="4" fill="rgb(215, 160, 140)" opacity="0.56" transform="rotate(47 1160 624)"/><rect x="1438" y="389" width="9" height="4" fill="rgb(70, 65, 95)" opacity="0.56" transform="rotate(164 1442 391)"/><rect x="899" y="407" width="7" height="3" fill="rgb(200, 185, 185)" opacity="0.77" transform="rotate(112 902 409)"/><rect x="564" y="458" width="5" height="4" fill="rgb(185, 200, 190)" opacity="0.46" transform="rotate(9 567 460)"/><rect x="887" y="343" width="8" height="3" fill="rgb(70, 65, 95)" opacity="0.49" transform="rotate(172 891 345)"/><rect x="529" y="388" width="7" height="3" fill="rgb(185, 200, 190)" opacity="0.71" transform="rotate(11 532 389)"/><rect x="702" y="245" width="9" height="4" fill="rgb(200, 185, 185)" opacity="0.64" transform="rotate(152 706 246)"/><rect x="852" y="515" width="7" height="4" fill="rgb(215, 160, 140)" opacity="0.66" transform="rotate(67 855 517)"/><rect x="1205" y="357" width="8" height="4" fill="rgb(160, 195, 170)" opacity="0.70" transform="rotate(29 1209 359)"/><rect x="692" y="432" width="7" height="3" fill="rgb(160, 195, 170)" opacity="0.47" transform="rotate(148 695 433)"/><rect x="1297" y="387" width="8" height="4" fill="rgb(70, 65, 95)" opacity="0.76" transform="rotate(128 1301 389)"/><rect x="612" y="371" width="8" height="3" fill="rgb(70, 65, 95)" opacity="0.57" transform="rotate(31 616 373)"/><rect x="943" y="399" width="6" height="3" fill="rgb(70, 65, 95)" opacity="0.52" transform="rotate(137 946 400)"/><rect x="983" y="569" width="9" height="3" fill="rgb(205, 130, 130)" opacity="0.42" transform="rotate(84 988 570)"/><rect x="1178" y="308" width="10" height="3" fill="rgb(185, 200, 190)" opacity="0.62" transform="rotate(123 1183 310)"/><rect x="1064" y="236" width="5" height="4" fill="rgb(170, 180, 210)" opacity="0.71" transform="rotate(81 1066 238)"/><rect x="803" y="445" width="9" height="4" fill="rgb(215, 160, 140)" opacity="0.77" transform="rotate(133 808 447)"/><rect x="1358" y="389" width="7" height="3" fill="rgb(160, 195, 170)" opacity="0.54" transform="rotate(92 1362 391)"/><rect x="979" y="275" width="8" height="3" fill="rgb(215, 160, 140)" opacity="0.73" transform="rotate(162 983 276)"/><rect x="620" y="428" width="5" height="3" fill="rgb(70, 65, 95)" opacity="0.51" transform="rotate(167 623 430)"/><rect x="1438" y="534" width="7" height="4" fill="rgb(200, 185, 185)" opacity="0.72" transform="rotate(90 1442 536)"/><rect x="913" y="294" width="10" height="3" fill="rgb(215, 160, 140)" opacity="0.57" transform="rotate(20 918 295)"/><rect x="1063" y="541" width="6" height="3" fill="rgb(200, 185, 185)" opacity="0.65" transform="rotate(7 1066 542)"/><rect x="745" y="515" width="10" height="3" fill="rgb(225, 215, 200)" opacity="0.76" transform="rotate(84 750 517)"/><rect x="951" y="501" width="8" height="3" fill="rgb(225, 215, 200)" opacity="0.47" transform="rotate(33 955 502)"/><rect x="1066" y="239" width="8" height="3" fill="rgb(185, 200, 190)" opacity="0.64" transform="rotate(66 1070 240)"/><rect x="884" y="490" width="8" height="4" fill="rgb(160, 195, 170)" opacity="0.67" transform="rotate(46 888 492)"/><rect x="1075" y="680" width="5" height="3" fill="rgb(200, 185, 185)" opacity="0.68" transform="rotate(58 1078 681)"/><rect x="856" y="514" width="7" height="3" fill="rgb(185, 200, 190)" opacity="0.77" transform="rotate(82 859 515)"/><rect x="1222" y="333" width="5" height="4" fill="rgb(70, 65, 95)" opacity="0.59" transform="rotate(117 1225 335)"/><rect x="1225" y="414" width="7" height="3" fill="rgb(70, 65, 95)" opacity="0.76" transform="rotate(142 1228 416)"/><rect x="1125" y="343" width="5" height="3" fill="rgb(170, 180, 210)" opacity="0.46" transform="rotate(112 1128 344)"/><rect x="849" y="299" width="6" height="3" fill="rgb(225, 215, 200)" opacity="0.61" transform="rotate(65 852 300)"/><rect x="937" y="484" width="9" height="4" fill="rgb(185, 200, 190)" opacity="0.65" transform="rotate(151 942 486)"/><rect x="1020" y="429" width="7" height="4" fill="rgb(205, 130, 130)" opacity="0.57" transform="rotate(114 1024 431)"/><rect x="1024" y="450" width="8" height="3" fill="rgb(185, 200, 190)" opacity="0.59" transform="rotate(98 1028 451)"/><rect x="881" y="462" width="6" height="3" fill="rgb(225, 215, 200)" opacity="0.54" transform="rotate(103 884 464)"/><rect x="676" y="323" width="6" height="3" fill="rgb(170, 180, 210)" opacity="0.76" transform="rotate(47 679 325)"/><rect x="748" y="433" width="8" height="3" fill="rgb(225, 215, 200)" opacity="0.70" transform="rotate(138 752 435)"/><rect x="857" y="530" width="8" height="3" fill="rgb(185, 200, 190)" opacity="0.66" transform="rotate(32 861 532)"/><rect x="1342" y="362" width="8" height="4" fill="rgb(205, 130, 130)" opacity="0.52" transform="rotate(89 1346 363)"/><rect x="1076" y="462" width="9" height="3" fill="rgb(225, 215, 200)" opacity="0.54" transform="rotate(1 1081 463)"/><rect x="1009" y="276" width="10" height="3" fill="rgb(225, 215, 200)" opacity="0.41" transform="rotate(85 1014 277)"/><rect x="1152" y="371" width="8" height="3" fill="rgb(185, 200, 190)" opacity="0.58" transform="rotate(14 1156 372)"/><rect x="1128" y="624" width="9" height="3" fill="rgb(185, 200, 190)" opacity="0.59" transform="rotate(53 1132 625)"/><rect x="1037" y="230" width="8" height="3" fill="rgb(185, 200, 190)" opacity="0.55" transform="rotate(26 1041 232)"/><rect x="674" y="580" width="8" height="3" fill="rgb(185, 200, 190)" opacity="0.44" transform="rotate(21 678 581)"/><rect x="1114" y="389" width="8" height="3" fill="rgb(205, 130, 130)" opacity="0.70" transform="rotate(72 1118 391)"/><rect x="1233" y="452" width="9" height="3" fill="rgb(200, 185, 185)" opacity="0.75" transform="rotate(113 1237 453)"/><rect x="861" y="370" width="7" height="3" fill="rgb(185, 200, 190)" opacity="0.52" transform="rotate(93 865 372)"/><rect x="684" y="578" width="8" height="3" fill="rgb(160, 195, 170)" opacity="0.67" transform="rotate(140 688 579)"/><rect x="1389" y="532" width="7" height="3" fill="rgb(200, 185, 185)" opacity="0.44" transform="rotate(52 1393 533)"/><rect x="1110" y="383" width="7" height="3" fill="rgb(215, 160, 140)" opacity="0.58" transform="rotate(82 1114 384)"/><rect x="1124" y="381" width="8" height="3" fill="rgb(170, 180, 210)" opacity="0.49" transform="rotate(0 1128 383)"/><rect x="1319" y="478" width="9" height="4" fill="rgb(170, 180, 210)" opacity="0.70" transform="rotate(154 1324 480)"/><rect x="847" y="264" width="8" height="3" fill="rgb(160, 195, 170)" opacity="0.49" transform="rotate(170 851 265)"/><rect x="1039" y="465" width="8" height="3" fill="rgb(225, 215, 200)" opacity="0.46" transform="rotate(158 1043 466)"/><rect x="1287" y="394" width="5" height="3" fill="rgb(225, 215, 200)" opacity="0.69" transform="rotate(65 1289 395)"/><rect x="1110" y="292" width="5" height="3" fill="rgb(70, 65, 95)" opacity="0.74" transform="rotate(57 1112 294)"/><rect x="558" y="439" width="7" height="4" fill="rgb(205, 130, 130)" opacity="0.45" transform="rotate(140 561 441)"/><rect x="1258" y="635" width="9" height="3" fill="rgb(200, 185, 185)" opacity="0.50" transform="rotate(53 1263 637)"/><rect x="553" y="442" width="8" height="4" fill="rgb(70, 65, 95)" opacity="0.68" transform="rotate(131 557 444)"/><rect x="783" y="125" width="8" height="3" fill="rgb(205, 130, 130)" opacity="0.76" transform="rotate(99 787 127)"/><rect x="925" y="531" width="8" height="3" fill="rgb(70, 65, 95)" opacity="0.40" transform="rotate(129 929 533)"/><rect x="1053" y="640" width="7" height="4" fill="rgb(185, 200, 190)" opacity="0.75" transform="rotate(85 1057 642)"/><rect x="813" y="523" width="8" height="3" fill="rgb(215, 160, 140)" opacity="0.59" transform="rotate(149 816 525)"/><rect x="1141" y="323" width="9" height="4" fill="rgb(185, 200, 190)" opacity="0.78" transform="rotate(145 1145 325)"/><rect x="1189" y="472" width="8" height="4" fill="rgb(215, 160, 140)" opacity="0.67" transform="rotate(107 1193 474)"/><rect x="554" y="274" width="10" height="3" fill="rgb(225, 215, 200)" opacity="0.45" transform="rotate(174 559 275)"/><rect x="1233" y="467" width="8" height="3" fill="rgb(215, 160, 140)" opacity="0.77" transform="rotate(28 1237 468)"/><rect x="1239" y="555" width="9" height="4" fill="rgb(225, 215, 200)" opacity="0.51" transform="rotate(131 1243 557)"/><rect x="1151" y="402" width="8" height="3" fill="rgb(200, 185, 185)" opacity="0.43" transform="rotate(67 1156 404)"/><rect x="806" y="185" width="6" height="3" fill="rgb(205, 130, 130)" opacity="0.43" transform="rotate(176 809 187)"/><rect x="918" y="384" width="9" height="3" fill="rgb(205, 130, 130)" opacity="0.46" transform="rotate(109 923 386)"/><rect x="1202" y="342" width="8" height="4" fill="rgb(215, 160, 140)" opacity="0.61" transform="rotate(169 1206 344)"/><rect x="1034" y="437" width="6" height="3" fill="rgb(170, 180, 210)" opacity="0.43" transform="rotate(97 1038 439)"/><rect x="820" y="645" width="9" height="3" fill="rgb(205, 130, 130)" opacity="0.62" transform="rotate(33 824 647)"/><rect x="946" y="428" width="5" height="4" fill="rgb(215, 160, 140)" opacity="0.60" transform="rotate(109 949 430)"/><rect x="924" y="346" width="9" height="4" fill="rgb(215, 160, 140)" opacity="0.76" transform="rotate(152 928 348)"/><rect x="1133" y="561" width="5" height="3" fill="rgb(205, 130, 130)" opacity="0.65" transform="rotate(40 1136 562)"/><rect x="709" y="534" width="6" height="3" fill="rgb(185, 200, 190)" opacity="0.69" transform="rotate(85 712 535)"/><rect x="947" y="365" width="8" height="3" fill="rgb(185, 200, 190)" opacity="0.42" transform="rotate(95 951 367)"/><rect x="1198" y="330" width="7" height="4" fill="rgb(205, 130, 130)" opacity="0.59" transform="rotate(72 1202 332)"/><rect x="999" y="702" width="5" height="3" fill="rgb(70, 65, 95)" opacity="0.72" transform="rotate(63 1001 703)"/><rect x="581" y="543" width="7" height="3" fill="rgb(160, 195, 170)" opacity="0.57" transform="rotate(46 585 544)"/><rect x="967" y="678" width="6" height="3" fill="rgb(200, 185, 185)" opacity="0.48" transform="rotate(5 970 680)"/><rect x="913" y="419" width="6" height="3" fill="rgb(215, 160, 140)" opacity="0.66" transform="rotate(33 916 420)"/><rect x="1066" y="387" width="6" height="3" fill="rgb(215, 160, 140)" opacity="0.72" transform="rotate(92 1069 388)"/><rect x="1000" y="417" width="5" height="3" fill="rgb(200, 185, 185)" opacity="0.52" transform="rotate(77 1002 418)"/><rect x="942" y="422" width="8" height="3" fill="rgb(205, 130, 130)" opacity="0.44" transform="rotate(11 946 424)"/><rect x="821" y="477" width="6" height="4" fill="rgb(205, 130, 130)" opacity="0.43" transform="rotate(129 824 479)"/><rect x="1265" y="392" width="9" height="3" fill="rgb(185, 200, 190)" opacity="0.58" transform="rotate(73 1270 394)"/><rect x="1040" y="336" width="10" height="3" fill="rgb(170, 180, 210)" opacity="0.65" transform="rotate(7 1045 338)"/><rect x="1318" y="409" width="6" height="3" fill="rgb(225, 215, 200)" opacity="0.52" transform="rotate(179 1322 411)"/><rect x="967" y="262" width="5" height="4" fill="rgb(200, 185, 185)" opacity="0.55" transform="rotate(127 969 264)"/><rect x="1057" y="364" width="7" height="3" fill="rgb(160, 195, 170)" opacity="0.64" transform="rotate(8 1061 366)"/><rect x="931" y="282" width="9" height="3" fill="rgb(225, 215, 200)" opacity="0.74" transform="rotate(175 936 284)"/><rect x="482" y="650" width="8" height="3" fill="rgb(205, 130, 130)" opacity="0.68" transform="rotate(149 486 652)"/><rect x="958" y="688" width="5" height="4" fill="rgb(215, 160, 140)" opacity="0.54" transform="rotate(98 961 690)"/><rect x="841" y="387" width="7" height="4" fill="rgb(70, 65, 95)" opacity="0.70" transform="rotate(164 845 389)"/><rect x="916" y="248" width="7" height="3" fill="rgb(170, 180, 210)" opacity="0.76" transform="rotate(147 920 249)"/><rect x="1243" y="520" width="9" height="3" fill="rgb(225, 215, 200)" opacity="0.70" transform="rotate(4 1247 521)"/><rect x="924" y="307" width="7" height="4" fill="rgb(160, 195, 170)" opacity="0.67" transform="rotate(17 927 309)"/><rect x="649" y="209" width="6" height="3" fill="rgb(70, 65, 95)" opacity="0.67" transform="rotate(53 652 211)"/><rect x="713" y="339" width="6" height="4" fill="rgb(160, 195, 170)" opacity="0.68" transform="rotate(58 716 341)"/><rect x="1169" y="522" width="7" height="3" fill="rgb(205, 130, 130)" opacity="0.44" transform="rotate(162 1173 523)"/><rect x="1027" y="409" width="6" height="3" fill="rgb(215, 160, 140)" opacity="0.56" transform="rotate(14 1030 410)"/><rect x="1011" y="478" width="8" height="3" fill="rgb(170, 180, 210)" opacity="0.56" transform="rotate(89 1015 480)"/><rect x="1037" y="410" width="6" height="4" fill="rgb(205, 130, 130)" opacity="0.43" transform="rotate(57 1040 412)"/><rect x="907" y="265" width="9" height="3" fill="rgb(205, 130, 130)" opacity="0.66" transform="rotate(10 912 267)"/><rect x="981" y="679" width="8" height="3" fill="rgb(160, 195, 170)" opacity="0.63" transform="rotate(30 985 680)"/><rect x="909" y="447" width="8" height="4" fill="rgb(170, 180, 210)" opacity="0.61" transform="rotate(49 913 449)"/><rect x="1376" y="632" width="8" height="3" fill="rgb(225, 215, 200)" opacity="0.63" transform="rotate(53 1380 633)"/><rect x="1168" y="514" width="8" height="3" fill="rgb(185, 200, 190)" opacity="0.76" transform="rotate(155 1172 516)"/><rect x="1257" y="517" width="10" height="3" fill="rgb(200, 185, 185)" opacity="0.43" transform="rotate(46 1262 518)"/><rect x="836" y="422" width="6" height="4" fill="rgb(215, 160, 140)" opacity="0.75" transform="rotate(117 839 424)"/><rect x="1253" y="682" width="6" height="3" fill="rgb(200, 185, 185)" opacity="0.41" transform="rotate(174 1256 683)"/><rect x="838" y="524" width="10" height="3" fill="rgb(70, 65, 95)" opacity="0.60" transform="rotate(125 843 526)"/><rect x="848" y="520" width="9" height="4" fill="rgb(205, 130, 130)" opacity="0.43" transform="rotate(154 852 522)"/><rect x="1173" y="558" width="10" height="4" fill="rgb(160, 195, 170)" opacity="0.48" transform="rotate(120 1178 560)"/><rect x="928" y="437" width="8" height="3" fill="rgb(185, 200, 190)" opacity="0.42" transform="rotate(21 932 438)"/><rect x="961" y="379" width="8" height="3" fill="rgb(170, 180, 210)" opacity="0.77" transform="rotate(1 965 380)"/><rect x="1079" y="396" width="6" height="4" fill="rgb(215, 160, 140)" opacity="0.57" transform="rotate(3 1082 398)"/><rect x="656" y="599" width="8" height="4" fill="rgb(205, 130, 130)" opacity="0.74" transform="rotate(15 660 601)"/><rect x="1354" y="392" width="9" height="4" fill="rgb(70, 65, 95)" opacity="0.62" transform="rotate(76 1358 393)"/><rect x="1218" y="464" width="9" height="4" fill="rgb(160, 195, 170)" opacity="0.69" transform="rotate(87 1222 466)"/><rect x="1028" y="669" width="9" height="3" fill="rgb(160, 195, 170)" opacity="0.44" transform="rotate(169 1033 670)"/><rect x="1061" y="482" width="8" height="3" fill="rgb(215, 160, 140)" opacity="0.70" transform="rotate(113 1065 483)"/><rect x="675" y="173" width="6" height="3" fill="rgb(160, 195, 170)" opacity="0.78" transform="rotate(72 678 174)"/><rect x="1168" y="306" width="9" height="4" fill="rgb(185, 200, 190)" opacity="0.72" transform="rotate(94 1172 308)"/><rect x="1039" y="362" width="5" height="4" fill="rgb(170, 180, 210)" opacity="0.47" transform="rotate(147 1041 364)"/><rect x="1060" y="311" width="9" height="4" fill="rgb(215, 160, 140)" opacity="0.58" transform="rotate(67 1064 313)"/><rect x="1235" y="407" width="8" height="3" fill="rgb(160, 195, 170)" opacity="0.75" transform="rotate(77 1239 408)"/><rect x="749" y="492" width="6" height="4" fill="rgb(200, 185, 185)" opacity="0.72" transform="rotate(58 753 493)"/><rect x="1149" y="483" width="8" height="3" fill="rgb(160, 195, 170)" opacity="0.74" transform="rotate(72 1153 484)"/><rect x="725" y="378" width="9" height="3" fill="rgb(185, 200, 190)" opacity="0.49" transform="rotate(83 730 380)"/><rect x="993" y="409" width="5" height="3" fill="rgb(185, 200, 190)" opacity="0.73" transform="rotate(70 995 410)"/><rect x="996" y="685" width="7" height="4" fill="rgb(185, 200, 190)" opacity="0.44" transform="rotate(119 999 686)"/><rect x="729" y="281" width="6" height="3" fill="rgb(70, 65, 95)" opacity="0.71" transform="rotate(57 732 282)"/><rect x="909" y="349" width="6" height="3" fill="rgb(160, 195, 170)" opacity="0.63" transform="rotate(171 912 351)"/><rect x="720" y="462" width="9" height="3" fill="rgb(215, 160, 140)" opacity="0.73" transform="rotate(70 724 463)"/><rect x="1047" y="619" width="8" height="4" fill="rgb(200, 185, 185)" opacity="0.50" transform="rotate(142 1051 621)"/><rect x="1231" y="396" width="7" height="4" fill="rgb(215, 160, 140)" opacity="0.59" transform="rotate(141 1234 398)"/><rect x="1127" y="542" width="5" height="3" fill="rgb(70, 65, 95)" opacity="0.55" transform="rotate(81 1130 543)"/><rect x="920" y="494" width="7" height="4" fill="rgb(160, 195, 170)" opacity="0.72" transform="rotate(115 923 496)"/><rect x="1216" y="360" width="6" height="3" fill="rgb(225, 215, 200)" opacity="0.72" transform="rotate(37 1219 361)"/><rect x="1234" y="613" width="8" height="3" fill="rgb(205, 130, 130)" opacity="0.59" transform="rotate(119 1238 615)"/><rect x="1254" y="597" width="6" height="3" fill="rgb(225, 215, 200)" opacity="0.40" transform="rotate(105 1257 598)"/><rect x="704" y="403" width="8" height="3" fill="rgb(215, 160, 140)" opacity="0.65" transform="rotate(89 708 404)"/><rect x="513" y="246" width="7" height="3" fill="rgb(225, 215, 200)" opacity="0.65" transform="rotate(135 516 248)"/><rect x="1182" y="426" width="7" height="4" fill="rgb(160, 195, 170)" opacity="0.63" transform="rotate(5 1185 428)"/><rect x="782" y="430" width="6" height="3" fill="rgb(170, 180, 210)" opacity="0.77" transform="rotate(150 785 431)"/><rect x="1060" y="260" width="8" height="3" fill="rgb(215, 160, 140)" opacity="0.69" transform="rotate(163 1064 261)"/><rect x="1147" y="305" width="8" height="3" fill="rgb(160, 195, 170)" opacity="0.75" transform="rotate(74 1151 307)"/><rect x="1175" y="329" width="7" height="4" fill="rgb(185, 200, 190)" opacity="0.60" transform="rotate(120 1178 331)"/><rect x="936" y="284" width="6" height="3" fill="rgb(215, 160, 140)" opacity="0.51" transform="rotate(144 939 286)"/><rect x="551" y="318" width="8" height="3" fill="rgb(160, 195, 170)" opacity="0.55" transform="rotate(137 555 320)"/><rect x="993" y="376" width="5" height="3" fill="rgb(185, 200, 190)" opacity="0.65" transform="rotate(8 995 377)"/><rect x="618" y="405" width="8" height="3" fill="rgb(185, 200, 190)" opacity="0.63" transform="rotate(52 622 407)"/><rect x="693" y="396" width="8" height="3" fill="rgb(160, 195, 170)" opacity="0.67" transform="rotate(140 697 398)"/><rect x="1092" y="289" width="8" height="3" fill="rgb(70, 65, 95)" opacity="0.42" transform="rotate(15 1096 291)"/><rect x="1336" y="573" width="8" height="3" fill="rgb(170, 180, 210)" opacity="0.46" transform="rotate(177 1340 575)"/><rect x="968" y="651" width="7" height="3" fill="rgb(70, 65, 95)" opacity="0.50" transform="rotate(24 972 653)"/><rect x="1293" y="500" width="7" height="4" fill="rgb(200, 185, 185)" opacity="0.60" transform="rotate(103 1297 502)"/><rect x="565" y="546" width="5" height="3" fill="rgb(205, 130, 130)" opacity="0.48" transform="rotate(178 567 547)"/><rect x="883" y="513" width="9" height="4" fill="rgb(200, 185, 185)" opacity="0.58" transform="rotate(37 888 515)"/><rect x="828" y="457" width="8" height="3" fill="rgb(185, 200, 190)" opacity="0.57" transform="rotate(103 832 458)"/><rect x="1116" y="525" width="7" height="3" fill="rgb(225, 215, 200)" opacity="0.77" transform="rotate(38 1119 526)"/><rect x="1112" y="481" width="10" height="3" fill="rgb(185, 200, 190)" opacity="0.76" transform="rotate(87 1117 482)"/><rect x="1150" y="460" width="8" height="3" fill="rgb(160, 195, 170)" opacity="0.43" transform="rotate(54 1154 461)"/><rect x="699" y="587" width="9" height="3" fill="rgb(215, 160, 140)" opacity="0.56" transform="rotate(155 703 589)"/><rect x="901" y="263" width="6" height="4" fill="rgb(170, 180, 210)" opacity="0.49" transform="rotate(152 904 265)"/><rect x="794" y="407" width="10" height="4" fill="rgb(160, 195, 170)" opacity="0.61" transform="rotate(165 799 409)"/><rect x="616" y="541" width="8" height="3" fill="rgb(170, 180, 210)" opacity="0.68" transform="rotate(36 620 542)"/><rect x="1122" y="372" width="6" height="3" fill="rgb(205, 130, 130)" opacity="0.51" transform="rotate(134 1125 374)"/><rect x="944" y="437" width="8" height="3" fill="rgb(215, 160, 140)" opacity="0.55" transform="rotate(107 948 438)"/><rect x="1171" y="431" width="5" height="3" fill="rgb(185, 200, 190)" opacity="0.53" transform="rotate(43 1174 432)"/><rect x="1074" y="378" width="6" height="3" fill="rgb(225, 215, 200)" opacity="0.61" transform="rotate(96 1077 380)"/><rect x="824" y="293" width="9" height="4" fill="rgb(225, 215, 200)" opacity="0.76" transform="rotate(85 828 294)"/><rect x="1177" y="451" width="7" height="3" fill="rgb(215, 160, 140)" opacity="0.45" transform="rotate(139 1180 453)"/><rect x="839" y="143" width="5" height="3" fill="rgb(170, 180, 210)" opacity="0.61" transform="rotate(108 842 145)"/><rect x="736" y="432" width="8" height="4" fill="rgb(70, 65, 95)" opacity="0.72" transform="rotate(108 740 434)"/><rect x="718" y="704" width="8" height="3" fill="rgb(185, 200, 190)" opacity="0.46" transform="rotate(140 722 705)"/><rect x="991" y="435" width="7" height="3" fill="rgb(170, 180, 210)" opacity="0.50" transform="rotate(62 995 437)"/><rect x="1191" y="316" width="8" height="3" fill="rgb(205, 130, 130)" opacity="0.59" transform="rotate(170 1195 318)"/><rect x="1438" y="472" width="9" height="4" fill="rgb(200, 185, 185)" opacity="0.70" transform="rotate(47 1443 474)"/><rect x="741" y="572" width="6" height="4" fill="rgb(225, 215, 200)" opacity="0.51" transform="rotate(116 744 573)"/><rect x="1229" y="473" width="8" height="3" fill="rgb(215, 160, 140)" opacity="0.66" transform="rotate(146 1233 475)"/><rect x="944" y="653" width="7" height="3" fill="rgb(205, 130, 130)" opacity="0.65" transform="rotate(49 947 654)"/><rect x="1072" y="343" width="8" height="3" fill="rgb(70, 65, 95)" opacity="0.63" transform="rotate(157 1076 345)"/><rect x="1226" y="359" width="5" height="3" fill="rgb(160, 195, 170)" opacity="0.60" transform="rotate(97 1229 360)"/><rect x="874" y="341" width="7" height="3" fill="rgb(185, 200, 190)" opacity="0.69" transform="rotate(130 877 342)"/><rect x="1219" y="659" width="7" height="4" fill="rgb(170, 180, 210)" opacity="0.67" transform="rotate(172 1222 661)"/><rect x="971" y="279" width="9" height="3" fill="rgb(205, 130, 130)" opacity="0.60" transform="rotate(145 975 281)"/><rect x="1202" y="451" width="5" height="4" fill="rgb(185, 200, 190)" opacity="0.40" transform="rotate(160 1205 453)"/><rect x="1137" y="394" width="8" height="4" fill="rgb(185, 200, 190)" opacity="0.67" transform="rotate(101 1142 395)"/><rect x="798" y="187" width="9" height="4" fill="rgb(215, 160, 140)" opacity="0.62" transform="rotate(61 802 189)"/><rect x="779" y="313" width="6" height="3" fill="rgb(70, 65, 95)" opacity="0.47" transform="rotate(176 782 314)"/><rect x="733" y="391" width="6" height="4" fill="rgb(200, 185, 185)" opacity="0.50" transform="rotate(62 736 393)"/><rect x="1243" y="635" width="9" height="3" fill="rgb(70, 65, 95)" opacity="0.58" transform="rotate(30 1247 637)"/><rect x="1007" y="515" width="9" height="3" fill="rgb(160, 195, 170)" opacity="0.61" transform="rotate(104 1012 517)"/><rect x="993" y="170" width="8" height="4" fill="rgb(160, 195, 170)" opacity="0.54" transform="rotate(147 997 172)"/><rect x="1028" y="460" width="6" height="3" fill="rgb(160, 195, 170)" opacity="0.42" transform="rotate(76 1031 461)"/><rect x="708" y="225" width="7" height="4" fill="rgb(205, 130, 130)" opacity="0.49" transform="rotate(10 711 227)"/><rect x="807" y="349" width="5" height="3" fill="rgb(185, 200, 190)" opacity="0.50" transform="rotate(122 809 350)"/><rect x="997" y="302" width="8" height="3" fill="rgb(225, 215, 200)" opacity="0.48" transform="rotate(74 1000 304)"/><rect x="941" y="679" width="6" height="4" fill="rgb(160, 195, 170)" opacity="0.67" transform="rotate(90 944 681)"/><rect x="841" y="318" width="10" height="3" fill="rgb(225, 215, 200)" opacity="0.58" transform="rotate(153 846 320)"/><rect x="970" y="393" width="8" height="4" fill="rgb(170, 180, 210)" opacity="0.59" transform="rotate(73 974 395)"/><rect x="1006" y="267" width="6" height="3" fill="rgb(215, 160, 140)" opacity="0.75" transform="rotate(136 1008 269)"/><rect x="1273" y="585" width="7" height="3" fill="rgb(225, 215, 200)" opacity="0.67" transform="rotate(150 1276 586)"/><rect x="1284" y="280" width="10" height="3" fill="rgb(185, 200, 190)" opacity="0.66" transform="rotate(166 1289 282)"/><rect x="1089" y="392" width="6" height="4" fill="rgb(160, 195, 170)" opacity="0.75" transform="rotate(4 1092 394)"/><rect x="552" y="119" width="8" height="3" fill="rgb(70, 65, 95)" opacity="0.49" transform="rotate(115 556 120)"/><rect x="966" y="471" width="7" height="4" fill="rgb(200, 185, 185)" opacity="0.47" transform="rotate(68 970 473)"/><rect x="1401" y="325" width="7" height="3" fill="rgb(170, 180, 210)" opacity="0.44" transform="rotate(66 1405 326)"/><rect x="1101" y="406" width="9" height="3" fill="rgb(225, 215, 200)" opacity="0.45" transform="rotate(7 1105 408)"/><rect x="952" y="615" width="9" height="3" fill="rgb(225, 215, 200)" opacity="0.41" transform="rotate(162 956 616)"/><rect x="1042" y="327" width="5" height="3" fill="rgb(205, 130, 130)" opacity="0.68" transform="rotate(176 1044 328)"/><rect x="1177" y="315" width="6" height="3" fill="rgb(225, 215, 200)" opacity="0.70" transform="rotate(155 1180 317)"/><rect x="1227" y="588" width="6" height="3" fill="rgb(205, 130, 130)" opacity="0.47" transform="rotate(156 1230 590)"/><rect x="712" y="244" width="9" height="3" fill="rgb(205, 130, 130)" opacity="0.60" transform="rotate(130 716 246)"/><rect x="771" y="222" width="9" height="4" fill="rgb(160, 195, 170)" opacity="0.57" transform="rotate(21 776 224)"/><rect x="1163" y="399" width="8" height="3" fill="rgb(215, 160, 140)" opacity="0.69" transform="rotate(99 1167 400)"/><rect x="1075" y="611" width="9" height="4" fill="rgb(185, 200, 190)" opacity="0.43" transform="rotate(139 1080 613)"/><rect x="884" y="559" width="5" height="3" fill="rgb(160, 195, 170)" opacity="0.53" transform="rotate(66 886 561)"/><rect x="1010" y="474" width="8" height="3" fill="rgb(205, 130, 130)" opacity="0.53" transform="rotate(78 1014 475)"/><rect x="1363" y="526" width="6" height="3" fill="rgb(215, 160, 140)" opacity="0.60" transform="rotate(99 1367 527)"/><rect x="623" y="407" width="7" height="3" fill="rgb(200, 185, 185)" opacity="0.66" transform="rotate(81 626 408)"/><rect x="1389" y="508" width="5" height="3" fill="rgb(225, 215, 200)" opacity="0.45" transform="rotate(32 1392 510)"/><rect x="1192" y="438" width="6" height="3" fill="rgb(200, 185, 185)" opacity="0.43" transform="rotate(39 1195 439)"/><rect x="1039" y="493" width="7" height="4" fill="rgb(70, 65, 95)" opacity="0.54" transform="rotate(34 1043 495)"/><rect x="572" y="472" width="6" height="3" fill="rgb(70, 65, 95)" opacity="0.73" transform="rotate(7 575 474)"/><rect x="1107" y="320" width="8" height="3" fill="rgb(170, 180, 210)" opacity="0.67" transform="rotate(137 1111 322)"/><rect x="1457" y="177" width="10" height="4" fill="rgb(170, 180, 210)" opacity="0.47" transform="rotate(123 1462 179)"/><rect x="1114" y="712" width="7" height="3" fill="rgb(215, 160, 140)" opacity="0.48" transform="rotate(134 1118 713)"/><rect x="753" y="282" width="5" height="4" fill="rgb(205, 130, 130)" opacity="0.54" transform="rotate(103 756 284)"/><rect x="648" y="352" width="9" height="3" fill="rgb(215, 160, 140)" opacity="0.46" transform="rotate(121 652 353)"/><rect x="886" y="277" width="8" height="4" fill="rgb(215, 160, 140)" opacity="0.75" transform="rotate(71 890 279)"/><rect x="1078" y="647" width="7" height="3" fill="rgb(160, 195, 170)" opacity="0.44" transform="rotate(109 1082 648)"/><rect x="875" y="379" width="6" height="3" fill="rgb(225, 215, 200)" opacity="0.62" transform="rotate(133 878 381)"/><rect x="1149" y="346" width="8" height="4" fill="rgb(160, 195, 170)" opacity="0.51" transform="rotate(162 1153 348)"/><rect x="900" y="358" width="5" height="3" fill="rgb(170, 180, 210)" opacity="0.41" transform="rotate(154 903 360)"/><rect x="771" y="605" width="6" height="4" fill="rgb(200, 185, 185)" opacity="0.47" transform="rotate(1 774 607)"/></g><rect width="1995" height="1131" fill="url(#crowd)"/><path d="M735 745 L720 680 L700 610" stroke="rgb(26,26,42)" stroke-width="7" fill="none" stroke-linejoin="round" stroke-linecap="round"/><ellipse cx="700" cy="605" rx="6" ry="8" fill="rgb(26,26,42)"/><path d="M800 730 L805 660 L790 600" stroke="rgb(26,26,42)" stroke-width="7" fill="none" stroke-linejoin="round" stroke-linecap="round"/><ellipse cx="790" cy="595" rx="6" ry="8" fill="rgb(26,26,42)"/><path d="M880 715 L870 640 L855 570" stroke="rgb(26,26,42)" stroke-width="7" fill="none" stroke-linejoin="round" stroke-linecap="round"/><ellipse cx="855" cy="565" rx="6" ry="8" fill="rgb(26,26,42)"/><path d="M935 705 L940 640 L925 580" stroke="rgb(26,26,42)" stroke-width="7" fill="none" stroke-linejoin="round" stroke-linecap="round"/><ellipse cx="925" cy="575" rx="6" ry="8" fill="rgb(26,26,42)"/><path d="M1060 715 L1070 650 L1085 585" stroke="rgb(26,26,42)" stroke-width="7" fill="none" stroke-linejoin="round" stroke-linecap="round"/><ellipse cx="1085" cy="580" rx="6" ry="8" fill="rgb(26,26,42)"/><path d="M1130 700 L1140 630 L1155 565" stroke="rgb(26,26,42)" stroke-width="7" fill="none" stroke-linejoin="round" stroke-linecap="round"/><ellipse cx="1155" cy="560" rx="6" ry="8" fill="rgb(26,26,42)"/><path d="M1195 715 L1200 650 L1215 600" stroke="rgb(26,26,42)" stroke-width="7" fill="none" stroke-linejoin="round" stroke-linecap="round"/><ellipse cx="1215" cy="595" rx="6" ry="8" fill="rgb(26,26,42)"/><path d="M1270 725 L1280 670 L1295 615" stroke="rgb(26,26,42)" stroke-width="7" fill="none" stroke-linejoin="round" stroke-linecap="round"/><ellipse cx="1295" cy="610" rx="6" ry="8" fill="rgb(26,26,42)"/><path d="M1345 740 L1350 690 L1345 635" stroke="rgb(26,26,42)" stroke-width="7" fill="none" stroke-linejoin="round" stroke-linecap="round"/><ellipse cx="1345" cy="630" rx="6" ry="8" fill="rgb(26,26,42)"/><path d="M1010 705 L1005 660 L1000 620" stroke="rgb(26,26,42)" stroke-width="7" fill="none" stroke-linejoin="round" stroke-linecap="round"/><ellipse cx="1000" cy="615" rx="6" ry="8" fill="rgb(26,26,42)"/><path d="M-60 1141 L-60 712 L-72 710 Q-67 705 -64 701 A14 16 0 1 1 -36 701 Q-33 705 -28 710 L-37 712 Q-32 706 -28 703 A14 17 0 1 1 -0 703 Q3 706 8 712 L-4 709 Q2 702 6 698 A17 20 0 1 1 40 698 Q44 702 50 709 L38 707 Q44 700 49 696 A18 21 0 1 1 84 696 Q89 700 95 707 L87 705 Q92 699 96 695 A14 17 0 1 1 124 695 Q128 699 133 705 L117 718 Q125 709 130 704 A21 25 0 1 1 171 704 Q176 709 184 718 L176 707 Q182 700 186 696 A17 20 0 1 1 220 696 Q224 700 230 707 L224 711 Q229 706 232 703 A13 16 0 1 1 259 703 Q262 706 267 711 L260 712 Q266 705 270 701 A17 19 0 1 1 303 701 Q307 705 312 712 L308 704 Q313 698 316 695 A14 16 0 1 1 344 695 Q347 698 352 704 L332 711 Q339 703 343 698 A20 23 0 1 1 383 698 Q388 703 395 711 L391 718 Q398 710 403 706 A20 23 0 1 1 442 706 Q446 710 453 718 L457 708 Q462 702 465 699 A13 15 0 1 1 491 699 Q494 702 499 708 L476 740 Q483 732 488 727 A21 25 0 1 1 531 727 Q536 732 543 740 L537 728 Q543 721 547 717 A17 19 0 1 1 580 717 Q584 721 590 728 L586 721 Q591 716 593 714 A12 14 0 1 1 618 714 Q621 716 625 721 L616 730 Q622 723 626 719 A17 20 0 1 1 660 719 Q664 723 670 730 L669 728 Q674 722 677 719 A14 17 0 1 1 705 719 Q709 722 714 728 L708 723 Q713 718 716 714 A14 16 0 1 1 744 714 Q747 718 752 723 L747 729 Q752 723 756 719 A15 18 0 1 1 787 719 Q790 723 796 729 L787 728 Q792 723 795 720 A13 15 0 1 1 820 720 Q823 723 827 728 L809 734 Q816 727 820 722 A19 22 0 1 1 858 722 Q862 727 869 734 L871 735 Q876 728 880 724 A16 19 0 1 1 912 724 Q916 728 922 735 L907 734 Q914 725 919 720 A21 25 0 1 1 961 720 Q966 725 973 734 L958 729 Q965 721 970 716 A21 25 0 1 1 1012 716 Q1017 721 1024 729 L1020 733 Q1027 725 1031 720 A20 23 0 1 1 1071 720 Q1076 725 1083 733 L1073 725 Q1078 719 1082 716 A15 17 0 1 1 1111 716 Q1114 719 1119 725 L1111 724 Q1115 719 1118 716 A13 15 0 1 1 1143 716 Q1146 719 1151 724 L1138 732 Q1145 724 1150 720 A20 23 0 1 1 1189 720 Q1193 724 1200 732 L1201 733 Q1207 726 1211 722 A17 20 0 1 1 1246 722 Q1250 726 1256 733 L1237 738 Q1245 729 1249 725 A20 24 0 1 1 1290 725 Q1295 729 1302 738 L1300 730 Q1306 723 1309 720 A16 19 0 1 1 1342 720 Q1346 723 1351 730 L1339 728 Q1345 720 1349 716 A17 20 0 1 1 1383 716 Q1388 720 1394 728 L1375 738 Q1382 730 1386 726 A19 22 0 1 1 1424 726 Q1428 730 1435 738 L1427 718 Q1434 711 1438 706 A18 22 0 1 1 1475 706 Q1479 711 1486 718 L1476 716 Q1482 710 1486 706 A16 19 0 1 1 1518 706 Q1522 710 1527 716 L1519 704 Q1523 699 1526 696 A13 15 0 1 1 1552 696 Q1555 699 1560 704 L1552 712 Q1556 706 1559 703 A13 16 0 1 1 1586 703 Q1589 706 1594 712 L1576 710 Q1583 703 1587 699 A17 20 0 1 1 1621 699 Q1625 703 1632 710 L1624 705 Q1629 700 1632 697 A14 16 0 1 1 1660 697 Q1663 700 1668 705 L1657 707 Q1663 700 1667 696 A18 21 0 1 1 1702 696 Q1706 700 1712 707 L1705 719 Q1712 711 1716 706 A20 23 0 1 1 1756 706 Q1761 711 1768 719 L1768 710 Q1772 704 1775 702 A13 15 0 1 1 1800 702 Q1803 704 1808 710 L1800 711 Q1805 705 1809 702 A14 17 0 1 1 1838 702 Q1841 705 1846 711 L1831 709 Q1837 702 1840 698 A16 19 0 1 1 1872 698 Q1876 702 1881 709 L1868 713 Q1874 706 1878 702 A17 20 0 1 1 1913 702 Q1917 706 1923 713 L1906 713 Q1913 706 1917 702 A18 21 0 1 1 1953 702 Q1957 706 1964 713 L1966 712 Q1971 706 1975 702 A15 18 0 1 1 2005 702 Q2008 706 2014 712 L2010 710 Q2015 705 2018 702 A13 15 0 1 1 2043 702 Q2046 705 2050 710 L2038 715 Q2043 709 2047 706 A15 18 0 1 1 2077 706 Q2081 709 2086 715 L2075 1141 Z" fill="rgb(25, 24, 40)"/><path d="M7 687 A17 20 0 0 1 29 672" stroke="rgb(50,70,125)" stroke-width="3" fill="none" opacity="0.22"/><path d="M131 691 A21 25 0 0 1 158 672" stroke="rgb(50,70,125)" stroke-width="3" fill="none" opacity="0.22"/><path d="M233 694 A13 16 0 0 1 251 682" stroke="rgb(50,70,125)" stroke-width="3" fill="none" opacity="0.22"/><path d="M971 702 A21 25 0 0 1 998 684" stroke="rgb(50,70,125)" stroke-width="3" fill="none" opacity="0.22"/><path d="M1151 707 A20 23 0 0 1 1176 690" stroke="rgb(50,70,125)" stroke-width="3" fill="none" opacity="0.22"/><path d="M1212 711 A17 20 0 0 1 1234 695" stroke="rgb(50,70,125)" stroke-width="3" fill="none" opacity="0.22"/><path d="M1387 714 A19 22 0 0 1 1412 697" stroke="rgb(50,70,125)" stroke-width="3" fill="none" opacity="0.22"/><path d="M1527 687 A13 15 0 0 1 1544 676" stroke="rgb(50,70,125)" stroke-width="3" fill="none" opacity="0.22"/><path d="M1717 693 A20 23 0 0 1 1743 676" stroke="rgb(50,70,125)" stroke-width="3" fill="none" opacity="0.22"/><path d="M1776 693 A13 15 0 0 1 1792 682" stroke="rgb(50,70,125)" stroke-width="3" fill="none" opacity="0.22"/><path d="M2048 696 A15 18 0 0 1 2067 682" stroke="rgb(50,70,125)" stroke-width="3" fill="none" opacity="0.22"/><path d="M-60 1141 L-60 765 L-84 774 Q-76 766 -71 761 A21 25 0 1 1 -29 761 Q-24 766 -16 774 L-40 768 Q-30 756 -23 749 A29 34 0 1 1 35 749 Q41 756 52 768 L37 774 Q47 763 53 756 A27 32 0 1 1 108 756 Q115 763 124 774 L114 768 Q121 760 126 755 A21 25 0 1 1 168 755 Q173 760 181 768 L156 785 Q168 772 175 765 A32 37 0 1 1 238 765 Q245 772 257 785 L242 774 Q251 763 257 757 A26 30 0 1 1 309 757 Q315 763 324 774 L326 770 Q334 761 339 756 A22 25 0 1 1 382 756 Q387 761 395 770 L370 788 Q381 774 389 767 A33 38 0 1 1 454 767 Q462 774 473 788 L468 804 Q478 792 485 785 A29 35 0 1 1 544 785 Q551 792 561 804 L559 797 Q568 787 573 782 A24 28 0 1 1 621 782 Q626 787 635 797 L612 809 Q623 796 631 788 A32 37 0 1 1 694 788 Q701 796 712 809 L694 788 Q703 778 708 772 A25 29 0 1 1 758 772 Q763 778 772 788 L747 786 Q757 775 763 768 A28 33 0 1 1 819 768 Q826 775 835 786 L827 796 Q838 784 845 777 A30 36 0 1 1 906 777 Q913 784 924 796 L920 791 Q930 778 937 771 A30 35 0 1 1 997 771 Q1004 778 1015 791 L1003 791 Q1014 779 1021 772 A30 35 0 1 1 1080 772 Q1087 779 1097 791 L1086 796 Q1095 786 1101 781 A24 28 0 1 1 1148 781 Q1154 786 1162 796 L1154 791 Q1163 782 1168 776 A23 27 0 1 1 1214 776 Q1220 782 1228 791 L1197 799 Q1209 786 1217 778 A33 39 0 1 1 1283 778 Q1291 786 1303 799 L1303 785 Q1311 775 1317 769 A24 28 0 1 1 1365 769 Q1371 775 1380 785 L1364 797 Q1372 787 1378 782 A23 27 0 1 1 1424 782 Q1429 787 1437 797 L1415 787 Q1426 773 1434 765 A33 39 0 1 1 1500 765 Q1508 773 1520 787 L1522 771 Q1529 762 1534 757 A21 25 0 1 1 1576 757 Q1581 762 1588 771 L1573 769 Q1581 761 1585 756 A21 24 0 1 1 1626 756 Q1631 761 1638 769 L1615 783 Q1624 772 1630 765 A27 31 0 1 1 1684 765 Q1690 772 1699 783 L1670 787 Q1681 774 1688 767 A31 37 0 1 1 1750 767 Q1758 774 1769 787 L1754 770 Q1762 760 1767 755 A23 27 0 1 1 1813 755 Q1819 760 1827 770 L1796 788 Q1807 775 1814 767 A31 37 0 1 1 1877 767 Q1884 775 1896 788 L1906 770 Q1913 762 1918 757 A21 24 0 1 1 1959 757 Q1964 762 1971 770 L1951 785 Q1962 772 1969 765 A31 36 0 1 1 2031 765 Q2038 772 2049 785 L2020 783 Q2031 770 2038 762 A31 37 0 1 1 2101 762 Q2109 770 2120 783 L2075 1141 Z" fill="rgb(21, 20, 33)"/><path d="M127 741 A21 25 0 0 1 155 722" stroke="rgb(50,70,125)" stroke-width="3" fill="none" opacity="0.22"/><path d="M846 757 A30 36 0 0 1 886 730" stroke="rgb(50,70,125)" stroke-width="3" fill="none" opacity="0.22"/><path d="M1102 765 A24 28 0 0 1 1133 744" stroke="rgb(50,70,125)" stroke-width="3" fill="none" opacity="0.22"/><path d="M1169 761 A23 27 0 0 1 1199 741" stroke="rgb(50,70,125)" stroke-width="3" fill="none" opacity="0.22"/><path d="M1379 767 A23 27 0 0 1 1409 747" stroke="rgb(50,70,125)" stroke-width="3" fill="none" opacity="0.22"/><path d="M1436 744 A33 39 0 0 1 1479 715" stroke="rgb(50,70,125)" stroke-width="3" fill="none" opacity="0.22"/><path d="M1587 743 A21 24 0 0 1 1613 725" stroke="rgb(50,70,125)" stroke-width="3" fill="none" opacity="0.22"/><path d="M1919 743 A21 24 0 0 1 1946 725" stroke="rgb(50,70,125)" stroke-width="3" fill="none" opacity="0.22"/><path d="M1971 745 A31 36 0 0 1 2011 718" stroke="rgb(50,70,125)" stroke-width="3" fill="none" opacity="0.22"/><path d="M-60 1141 L-60 850 L-123 893 Q-107 874 -96 864 A46 54 0 1 1 -4 864 Q7 874 23 893 L7 893 Q20 878 29 869 A37 44 0 1 1 103 869 Q112 878 125 893 L99 886 Q110 872 118 864 A33 39 0 1 1 185 864 Q193 872 205 886 L173 878 Q186 862 195 854 A37 43 0 1 1 269 854 Q277 862 290 878 L259 901 Q275 883 285 873 A44 52 0 1 1 373 873 Q383 883 399 901 L355 902 Q372 882 383 871 A48 57 0 1 1 479 871 Q490 882 507 902 L495 898 Q511 880 521 869 A45 53 0 1 1 611 869 Q621 880 637 898 L639 876 Q652 862 660 853 A36 42 0 1 1 732 853 Q741 862 753 876 L724 886 Q739 868 749 858 A43 51 0 1 1 835 858 Q845 868 861 886 L850 896 Q863 881 871 873 A35 41 0 1 1 941 873 Q949 881 962 896 L941 888 Q956 870 967 859 A44 52 0 1 1 1054 859 Q1065 870 1080 888 L1075 906 Q1090 889 1100 879 A41 49 0 1 1 1182 879 Q1192 889 1207 906 L1170 916 Q1187 896 1198 885 A48 57 0 1 1 1295 885 Q1306 896 1323 916 L1294 894 Q1308 878 1317 869 A38 45 0 1 1 1393 869 Q1402 878 1416 894 L1396 885 Q1411 868 1421 857 A43 51 0 1 1 1508 857 Q1518 868 1533 885 L1505 890 Q1522 871 1533 860 A47 56 0 1 1 1628 860 Q1639 871 1656 890 L1636 906 Q1652 887 1662 876 A45 54 0 1 1 1753 876 Q1764 887 1780 906 L1770 883 Q1781 870 1789 862 A34 40 0 1 1 1857 862 Q1865 870 1877 883 L1840 894 Q1856 875 1867 865 A46 54 0 1 1 1960 865 Q1970 875 1987 894 L1955 894 Q1969 878 1978 869 A39 46 0 1 1 2057 869 Q2066 878 2080 894 L2075 1141 Z" fill="rgb(18, 17, 28)"/><path d="M-93 834 A46 54 0 0 1 -34 793" stroke="rgb(50,70,125)" stroke-width="3" fill="none" opacity="0.22"/><path d="M197 830 A37 43 0 0 1 245 797" stroke="rgb(50,70,125)" stroke-width="3" fill="none" opacity="0.22"/><path d="M288 844 A44 52 0 0 1 345 806" stroke="rgb(50,70,125)" stroke-width="3" fill="none" opacity="0.22"/><path d="M524 840 A45 53 0 0 1 582 801" stroke="rgb(50,70,125)" stroke-width="3" fill="none" opacity="0.22"/><path d="M1791 840 A34 40 0 0 1 1835 810" stroke="rgb(50,70,125)" stroke-width="3" fill="none" opacity="0.22"/><path d="M1870 835 A46 54 0 0 1 1930 794" stroke="rgb(50,70,125)" stroke-width="3" fill="none" opacity="0.22"/><path d="M1980 843 A39 46 0 0 1 2032 808" stroke="rgb(50,70,125)" stroke-width="3" fill="none" opacity="0.22"/><path d="M-60 1141 L-60 955 L-128 993 Q-110 973 -99 962 A49 57 0 1 1 -1 962 Q10 973 28 993 L-21 1023 Q1 997 16 982 A64 75 0 1 1 144 982 Q159 997 182 1023 L151 1017 Q170 995 182 982 A54 63 0 1 1 290 982 Q302 995 321 1017 L296 1007 Q316 983 330 969 A59 69 0 1 1 447 969 Q461 983 482 1007 L451 1004 Q470 981 483 969 A55 65 0 1 1 593 969 Q606 981 625 1004 L610 1013 Q626 994 637 984 A45 53 0 1 1 727 984 Q737 994 753 1013 L716 1029 Q737 1004 752 990 A60 71 0 1 1 873 990 Q887 1004 908 1029 L882 992 Q901 971 913 958 A53 62 0 1 1 1019 958 Q1031 971 1050 992 L1019 1035 Q1039 1012 1053 998 A57 67 0 1 1 1167 998 Q1180 1012 1200 1035 L1152 1032 Q1173 1007 1187 993 A60 71 0 1 1 1308 993 Q1322 1007 1344 1032 L1302 1023 Q1321 1001 1333 989 A52 62 0 1 1 1438 989 Q1450 1001 1469 1023 L1438 1016 Q1457 994 1470 982 A53 62 0 1 1 1575 982 Q1588 994 1606 1016 L1570 1033 Q1592 1007 1607 992 A63 74 0 1 1 1734 992 Q1749 1007 1771 1033 L1728 1033 Q1749 1007 1764 993 A61 72 0 1 1 1887 993 Q1901 1007 1923 1033 L1873 1039 Q1895 1013 1910 998 A63 74 0 1 1 2036 998 Q2050 1013 2073 1039 L2075 1141 Z" fill="rgb(16, 16, 24)"/><path d="M20 941 A64 75 0 0 1 103 884" stroke="rgb(50,70,125)" stroke-width="3" fill="none" opacity="0.22"/><path d="M1056 962 A57 67 0 0 1 1130 911" stroke="rgb(50,70,125)" stroke-width="3" fill="none" opacity="0.22"/><path d="M1913 958 A63 74 0 0 1 1995 902" stroke="rgb(50,70,125)" stroke-width="3" fill="none" opacity="0.22"/><path d="M-60 1141 L-60 1065 L-167 1125 Q-141 1094 -124 1077 A74 87 0 1 1 24 1077 Q41 1094 67 1125 L12 1134 Q39 1103 56 1085 A75 88 0 1 1 207 1085 Q224 1103 251 1134 L200 1150 Q225 1121 242 1105 A70 83 0 1 1 383 1105 Q399 1121 424 1150 L404 1142 Q428 1115 443 1099 A66 78 0 1 1 576 1099 Q592 1115 615 1142 L571 1111 Q593 1086 607 1071 A61 72 0 1 1 730 1071 Q744 1086 766 1111 L730 1146 Q751 1121 766 1106 A61 72 0 1 1 888 1106 Q902 1121 924 1146 L843 1151 Q870 1119 888 1102 A76 90 0 1 1 1040 1102 Q1058 1119 1085 1151 L1035 1145 Q1064 1111 1084 1092 A82 97 0 1 1 1248 1092 Q1268 1111 1297 1145 L1287 1129 Q1310 1101 1326 1085 A67 79 0 1 1 1460 1085 Q1476 1101 1500 1129 L1468 1139 Q1493 1111 1509 1094 A69 82 0 1 1 1648 1094 Q1664 1111 1689 1139 L1686 1133 Q1707 1109 1720 1095 A58 69 0 1 1 1837 1095 Q1851 1109 1871 1133 L1804 1146 Q1830 1116 1847 1099 A73 86 0 1 1 1992 1099 Q2010 1116 2035 1146 L2075 1141 Z" fill="rgb(15, 15, 21)"/><path d="M61 1036 A75 88 0 0 1 158 970" stroke="rgb(50,70,125)" stroke-width="3" fill="none" opacity="0.22"/><path d="M246 1059 A70 83 0 0 1 337 997" stroke="rgb(50,70,125)" stroke-width="3" fill="none" opacity="0.22"/><path d="M1513 1049 A69 82 0 0 1 1603 988" stroke="rgb(50,70,125)" stroke-width="3" fill="none" opacity="0.22"/><path d="M1851 1052 A73 86 0 0 1 1945 988" stroke="rgb(50,70,125)" stroke-width="3" fill="none" opacity="0.22"/></g></svg></div>

<!-- title -->
<div class="a txt" style="left:618px;top:1790px;font-size:40px;line-height:48px;letter-spacing:0.55px;color:rgb(38,40,44)">Concerto in diretta - Palm Springs</div>

<!-- sidebar skeleton -->
<div class="a" style="left:2648px;top:883px;width:287px;height:162px;border-radius:12px;background:rgb(131,132,136)"></div>
<div class="a" style="left:2648px;top:1063px;width:287px;height:165px;border-radius:12px;background:rgb(131,132,136)"></div>
<div class="a" style="left:2648px;top:1243px;width:287px;height:165px;border-radius:12px;background:rgb(131,132,136)"></div>
<div class="a" style="left:2648px;top:1421px;width:287px;height:171px;border-radius:12px;background:rgb(131,132,136)"></div>
<div class="a" style="left:2648px;top:1600px;width:287px;height:166px;border-radius:12px;background:rgb(131,132,136)"></div>
<div class="a" style="left:2648px;top:1777px;width:287px;height:103px;border-radius:12px 12px 0 0;background:rgb(131,132,136)"></div>
<div class="a" style="left:2943px;top:1067px;width:287px;height:31px;border-radius:15.5px;background:rgb(138,139,141)"></div>
<div class="a" style="left:2943px;top:1104px;width:343px;height:32px;border-radius:16.0px;background:rgb(138,139,141)"></div>
<div class="a" style="left:2943px;top:1141px;width:153px;height:26px;border-radius:13.0px;background:rgb(138,139,141)"></div>
<div class="a" style="left:2943px;top:1172px;width:229px;height:26px;border-radius:13.0px;background:rgb(138,139,141)"></div>
<div class="a" style="left:2943px;top:1242px;width:287px;height:33px;border-radius:16.5px;background:rgb(138,139,141)"></div>
<div class="a" style="left:2943px;top:1279px;width:343px;height:33px;border-radius:16.5px;background:rgb(138,139,141)"></div>
<div class="a" style="left:2943px;top:1321px;width:153px;height:25px;border-radius:12.5px;background:rgb(138,139,141)"></div>
<div class="a" style="left:2943px;top:1355px;width:251px;height:25px;border-radius:12.5px;background:rgb(138,139,141)"></div>
<div class="a" style="left:2943px;top:1431px;width:287px;height:33px;border-radius:16.5px;background:rgb(138,139,141)"></div>
<div class="a" style="left:2943px;top:1469px;width:208px;height:26px;border-radius:13.0px;background:rgb(138,139,141)"></div>
<div class="a" style="left:2943px;top:1605px;width:356px;height:33px;border-radius:16.5px;background:rgb(138,139,141)"></div>
<div class="a" style="left:2943px;top:1643px;width:307px;height:33px;border-radius:16.5px;background:rgb(138,139,141)"></div>
<div class="a" style="left:2943px;top:1682px;width:152px;height:26px;border-radius:13.0px;background:rgb(138,139,141)"></div>
<div class="a" style="left:2943px;top:1713px;width:334px;height:26px;border-radius:13.0px;background:rgb(138,139,141)"></div>
<div class="a" style="left:2943px;top:1777px;width:334px;height:32px;border-radius:16.0px;background:rgb(138,139,141)"></div>
<div class="a" style="left:2943px;top:1814px;width:307px;height:32px;border-radius:16.0px;background:rgb(138,139,141)"></div>
<div class="a" style="left:2943px;top:1853px;width:152px;height:26px;border-radius:13.0px;background:rgb(138,139,141)"></div>

<!-- cast pill -->
<div class="a" style="left:652px;top:1602px;width:786px;height:121px;border-radius:61px;background:rgb(33,34,38)"></div>
<svg class="a" style="left:690px;top:1620px" width="110" height="80" viewBox="0 0 110 80"><path d="M32.6 31.6 V28 A3.5 3.5 0 0 1 36.1 24.5 H74.3 A3.5 3.5 0 0 1 77.8 28 V57 A3.5 3.5 0 0 1 74.3 60.5 H62.7" fill="none" stroke="#fff" stroke-width="4.8" stroke-linecap="round"/><path d="M30 63 V56 A7 7 0 0 1 37 63 Z" fill="#fff"/><path d="M31.69 49.77 A13.3 13.3 0 0 1 43.40 60.69" fill="none" stroke="#fff" stroke-width="4.8" stroke-linecap="round"/><path d="M32.64 40.72 A22.4 22.4 0 0 1 52.36 59.11" fill="none" stroke="#fff" stroke-width="4.8" stroke-linecap="round"/></svg>
<div class="a txt" style="left:804px;top:1638px;font-size:37px;line-height:48px;color:#fff">In riproduzione sulla TV del salotto</div>

<!-- popup -->
<div class="a" style="left:2508px;top:557px;width:801px;height:471px;border-radius:13px;background:#fff;overflow:hidden;box-shadow:0 6px 22px rgba(0,0,0,0.35)">
  <div class="a" style="left:0;top:0;width:801px;height:265px;background:rgb(5,9,20)"></div>
  <div class="a" style="left:435px;top:0;width:366px;height:265px;overflow:hidden;filter:brightness(1.45) saturate(1.2)"><svg width="366" height="265" viewBox="351 74 1274 920" preserveAspectRatio="none"><use href="#vsvg"/></svg><div class="a" style="left:0;top:0;width:366px;height:265px;background:linear-gradient(180deg, rgba(5,6,16,0) 62%, rgba(5,6,16,0.5) 78%, rgba(5,6,16,0.65) 100%)"></div></div>
  <div class="a" style="left:41px;top:39px;width:57px;height:16px;border-radius:8px;background:rgb(205,210,250)"></div>
  <div class="a" style="left:41px;top:88px;width:257px;height:16px;border-radius:8px;background:rgb(205,210,250)"></div>
  <div class="a" style="left:41px;top:115px;width:134px;height:18px;border-radius:9px;background:rgb(205,210,250)"></div>
  
  
  
  <svg class="a" style="left:0;top:160px" width="400" height="80" viewBox="0 160 400 80"><g fill="rgb(205,210,250)" stroke="rgb(205,210,250)" stroke-width="3" stroke-linejoin="round"><path d="M50.6 203.5 L64.5 193.8 V213.2 Z"/><path d="M70.7 203.5 L85.3 193.8 V213.2 Z"/><path d="M139.1 191.6 L159.9 203.7 L139.1 215.8 Z"/><path d="M209.1 193.8 L223 203.5 L209.1 213.2 Z"/><path d="M229.5 193.8 L243.5 203.5 L229.5 213.2 Z"/></g><rect x="276.2" y="178.6" width="3.9" height="50" rx="1.95" fill="rgb(205,210,250)"/><g fill="none" stroke="rgb(205,210,250)" stroke-width="3.3"><path d="M308.5 183 L321 195.5"/><path d="M321.7 182.8 V196.7 H308"/><path d="M311.2 202 V216.2 H330"/><path d="M327.7 184.8 H349.6 V202.6"/></g><rect x="333.6" y="205.9" width="19.4" height="12.5" fill="rgb(205,210,250)"/></svg>
  
  <!-- rows -->
  <svg class="a" style="left:45px;top:298px" width="48" height="38" viewBox="0 0 48 38"><rect x="3.5" y="3" width="41" height="32" rx="2" fill="none" stroke="#111" stroke-width="3.4"/><path d="M10 19 H13 M17 19 H38 M10 26 H29 M33 26 H37" stroke="#111" stroke-width="3.2"/></svg>
  <div class="a txt" style="left:124px;top:297px;font-size:35px;line-height:44px;color:rgb(18,18,22)">Sottotitoli in tempo reale</div>
  <svg class="a" style="left:704px;top:302px" width="54" height="32" viewBox="0 0 54 32"><rect x="4" y="4" width="46" height="24" rx="12" fill="none" stroke="#111" stroke-width="4"/><circle cx="16" cy="16" r="6.5" fill="#111"/></svg>
  <div class="a" style="left:0;top:369px;width:801px;height:1px;background:rgb(125,135,200)"></div>
  <svg class="a" style="left:44px;top:394px" width="52" height="52" viewBox="0 0 52 52"><path d="M20.62 12.00 L21.81 5.42 L30.19 5.42 L31.38 12.00 L35.44 14.34 L41.73 12.08 L45.91 19.34 L40.82 23.65 L40.82 28.35 L45.91 32.66 L41.73 39.92 L35.44 37.66 L31.38 40.00 L30.19 46.58 L21.81 46.58 L20.62 40.00 L16.56 37.66 L10.27 39.92 L6.09 32.66 L11.18 28.35 L11.18 23.65 L6.09 19.34 L10.27 12.08 L16.56 14.34 Z" fill="none" stroke="#111" stroke-width="2.9" stroke-linejoin="miter"/><circle cx="26" cy="26" r="7.1" fill="#111"/></svg>
  <div class="a txt" style="left:124px;top:397px;font-size:35.8px;line-height:44px;color:rgb(18,18,22)">Impostazioni sottotitoli codificati</div>
  <svg class="a" style="left:724px;top:399px" width="46" height="46" viewBox="0 0 46 46"><path d="M21 4 H4 V40 H40 V23" fill="none" stroke="#111" stroke-width="3.3" stroke-linejoin="round"/><path d="M27 4 H40 V17 M40 4 L16.5 27.5" fill="none" stroke="#111" stroke-width="3.3"/></svg>
</div>
</body></html>
